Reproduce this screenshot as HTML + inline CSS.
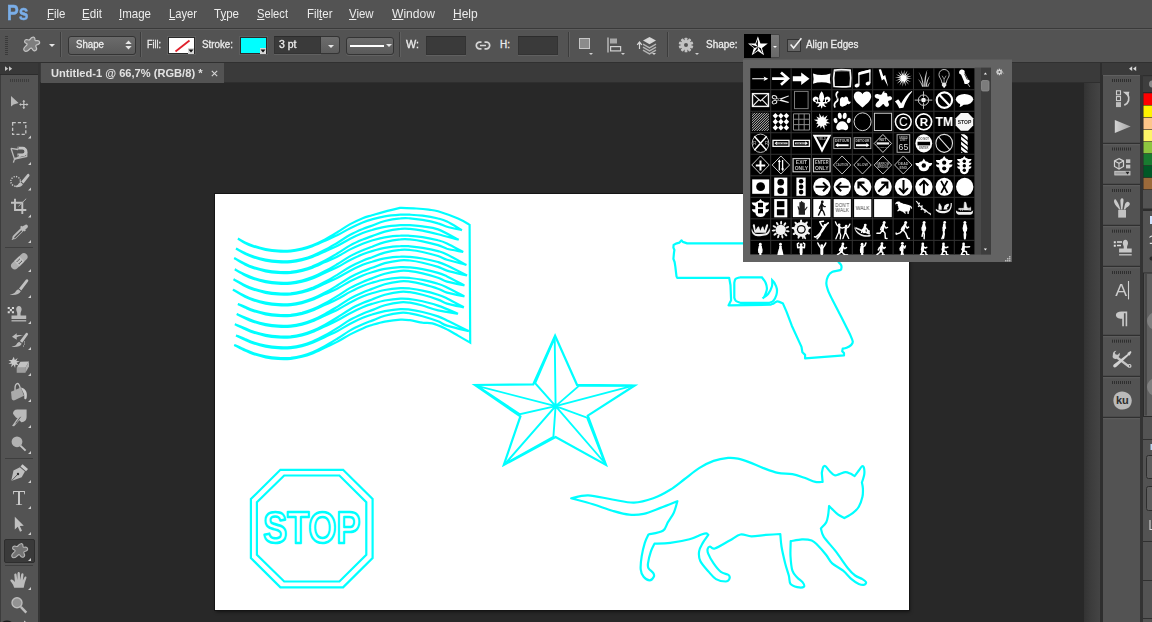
<!DOCTYPE html>
<html lang="en">
<head>
<meta charset="utf-8">
<title>Untitled-1 @ 66,7% (RGB/8) *</title>
<style>
*{box-sizing:border-box;margin:0;padding:0}
html,body{width:1152px;height:622px;overflow:hidden;background:#282828}
body{position:relative;font-family:"Liberation Sans",sans-serif;color:#e4e4e4;font-size:12px}
.abs{position:absolute}
.t{position:absolute;white-space:nowrap;transform-origin:0 50%;line-height:14px;color:#e8e8e8}
#menubar{left:0;top:0;width:1152px;height:29px;background:#535353;border-bottom:1px solid #3a3a3a}
#menubar .t{top:6px;font-size:13px;line-height:16px;color:#ececec}
#menubar .t u{text-decoration:underline;text-underline-offset:1px;text-decoration-thickness:1px}
#ps{position:absolute;left:7.3px;top:.6px;font-size:22.5px;font-weight:bold;color:#7aaee8;-webkit-text-stroke:.4px #7aaee8;line-height:24px;transform-origin:0 50%}
#optbar{left:0;top:29px;width:1152px;height:34px;background:#535353;border-top:1px solid #5e5e5e;border-bottom:1px solid #303030}
#optbar .t{font-size:10px;top:8.2px;-webkit-text-stroke:.3px #e8e8e8;color:#f0f0f0}
.sep{position:absolute;top:2px;width:2px;height:25px;border-left:1px solid #3c3c3c;border-right:1px solid #5f5f5f}
.dd{position:absolute;border:1px solid #343434;border-radius:3px;background:linear-gradient(#6b6b6b,#5a5a5a);box-shadow:0 1px 0 #626262}
.inp{position:absolute;background:#3a3a3a;border:1px solid #333;border-top-color:#2c2c2c;box-shadow:0 1px 0 #606060}
.sw{position:absolute;height:17px!important;border:1px solid #2a2a2a;box-shadow:0 0 0 1px #5e5e5e}
.tri{position:absolute;width:0;height:0;border-left:3px solid transparent;border-right:3px solid transparent;border-top:3px solid #e6e6e6}
.tris{position:absolute;width:0;height:0;border-left:2.5px solid transparent;border-right:2.5px solid transparent;border-top:2.5px solid #d0d0d0}
#tabbar{left:38px;top:63px;width:1064px;height:20px;background:#3a3a3a;border-bottom:1px solid #2e2e2e}
#tab{left:40.5px;top:63px;width:183.5px;height:19.5px;background:#535353}
#tab .t{left:10px;top:3px;font-size:11.5px;font-weight:bold;color:#e2e2e2}
#tools{left:0;top:63px;width:40px;height:559px;background:#535353;border-right:2px solid #343434;border-left:1px solid #3c3c3c}
#toolshead{left:0;top:63px;width:38px;height:12px;background:#383838;border-bottom:1px solid #2c2c2c}
#vscroll{left:1084px;top:83px;width:16.5px;height:539px;background:linear-gradient(90deg,#333,#3c3c3c 40%,#454545)}
#rgap{left:1100px;top:63px;width:3px;height:559px;background:#2e2e2e}
#rhead{left:1102px;top:63px;width:50px;height:12px;background:#3a3a3a}
#ricons{left:1103px;top:75px;width:37px;height:547px;background:#535353}
#rgap2{left:1140px;top:75px;width:3px;height:547px;background:#333}
#rpanel{left:1143px;top:75px;width:9px;height:547px;background:#535353}
#canvas{left:215px;top:194px;width:694px;height:416px;background:#fff;box-shadow:0 0 0 1px #151515, 1px 2px 3px rgba(0,0,0,.5)}
#art{left:0;top:0;width:1152px;height:622px}
#picker{left:743px;top:60px;width:269px;height:202px;background:#636363;box-shadow:0 -1px 0 rgba(99,99,99,.5)}
#pgrid{left:750px;top:68px;width:225px;height:187px;background:#000}
#ps{transform:scaleX(0.7809)}
#m1{transform:scaleX(0.8823)}
#m2{transform:scaleX(0.8926)}
#m3{transform:scaleX(0.8850)}
#m4{transform:scaleX(0.8607)}
#m5{transform:scaleX(0.8864)}
#m6{transform:scaleX(0.8578)}
#m7{transform:scaleX(0.8822)}
#m8{transform:scaleX(0.8800)}
#m9{transform:scaleX(0.9297)}
#m10{transform:scaleX(0.9234)}
#o_shape{transform:scaleX(0.9681)}
#o_fill{transform:scaleX(0.8996)}
#o_stroke{transform:scaleX(0.9783)}
#o_3pt{transform:scaleX(1.0487)}
#o_w{transform:scaleX(1.0791)}
#o_h{transform:scaleX(1.0000)}
#o_shape2{transform:scaleX(0.9967)}
#o_align{transform:scaleX(0.9836)}
#tabt{transform:scaleX(0.9654)}

</style>
</head>
<body>
<div id="menubar" class="abs">
  <div id="ps">Ps</div>
  <span class="t" id="m1" style="left:47px"><u>F</u>ile</span>
  <span class="t" id="m2" style="left:82px"><u>E</u>dit</span>
  <span class="t" id="m3" style="left:119px"><u>I</u>mage</span>
  <span class="t" id="m4" style="left:169px"><u>L</u>ayer</span>
  <span class="t" id="m5" style="left:214px">T<u>y</u>pe</span>
  <span class="t" id="m6" style="left:257px"><u>S</u>elect</span>
  <span class="t" id="m7" style="left:306.5px">Fil<u>t</u>er</span>
  <span class="t" id="m8" style="left:349px"><u>V</u>iew</span>
  <span class="t" id="m9" style="left:392px"><u>W</u>indow</span>
  <span class="t" id="m10" style="left:453px"><u>H</u>elp</span>
</div>
<div id="optbar" class="abs">
  <!-- gripper -->
  <div class="abs" style="left:5px;top:6px;width:3px;height:20px;background:repeating-linear-gradient(#3a3a3a 0 1px,transparent 1px 2px)"></div>
  <!-- tool preset icon -->
  <svg class="abs" style="left:0;top:0" width="60" height="32" viewBox="0 30 60 32"><path transform="translate(12 -506.500)" d="M20.900 543.700c1.300-.3 2.100.6 2 1.900-.1 1.100.3 1.800 1.400 1.600 1.500-.3 3 .2 3.300 1.500.3 1.400-.9 2.200-2.200 2.500-1.500.3-2 1.100-1.300 2.300.7 1.300.7 2.800-.5 3.500-1.200.7-2.500 0-3.200-1.300-.6-1.100-1.500-1.400-2.400-.5-1.200 1.200-2.300 2.700-4.200 2.600-1.700-.1-2.500-1.600-1.800-3.100.6-1.300 1.900-2.100 2.800-3.200.6-.8.300-1.400-.6-1.700-1.200-.4-1.900-1.300-1.500-2.400.4-1.200 1.700-1.500 2.900-1.100 1.100.4 2 .3 2.600-.7.600-1 1.300-1.700 2.700-1.900z" fill="#7e7e7e" stroke="#c4c4c4" stroke-width="1.200"/></svg>
  <div class="tri" style="left:48.500px;top:14px"></div>
  <div class="sep" style="left:60px"></div>
  <div class="dd" style="left:68px;top:5.5px;width:68px;height:19.5px"></div>
  <span class="t" id="o_shape" style="left:76px">Shape</span>
  <svg class="abs" style="left:125px;top:9.5px" width="7" height="10" viewBox="0 0 7 10"><path d="M.3 4L3.500.6 6.700 4zM.3 6L3.500 9.400 6.700 6z" fill="#e6e6e6"/></svg>
  <div class="sep" style="left:140px"></div>
  <span class="t" id="o_fill" style="left:147px">Fill:</span>
  <div class="sw" style="left:168px;top:7px;width:27px;height:18px;background:#fff"></div>
  <svg class="abs" style="left:169px;top:8px" width="25" height="16" viewBox="0 0 25 16"><path d="M6.500 13.500L20.500 2.500" stroke="#e0202c" stroke-width="1.800"/><path d="M19 10h6v6h-6z" fill="#d8d8d8"/><path d="M19.500 11.500h5L22 14.500z" fill="#111"/></svg>
  <span class="t" id="o_stroke" style="left:202px">Stroke:</span>
  <div class="sw" style="left:240px;top:7px;width:27px;height:18px;background:#00ffff"></div>
  <svg class="abs" style="left:241px;top:8px" width="25" height="16" viewBox="0 0 25 16"><path d="M19 10h6v6h-6z" fill="#d8d8d8"/><path d="M19.500 11.500h5L22 14.500z" fill="#111"/></svg>
  <div class="inp" style="left:274px;top:6px;width:47px;height:18px"></div>
  <div class="abs" style="left:321px;top:6px;width:19px;height:18px;background:linear-gradient(#6c6c6c,#5c5c5c);border:1px solid #343434;border-left:none;border-radius:0 3px 3px 0"></div>
  <div class="tri" style="left:327.500px;top:15px"></div>
  <span class="t" id="o_3pt" style="left:278.500px">3 pt</span>
  <div class="dd" style="left:346px;top:7px;width:48px;height:18px"></div>
  <div class="abs" style="left:350px;top:14.500px;width:34px;height:2.500px;background:#fff"></div>
  <div class="tri" style="left:385.500px;top:14px"></div>
  <div class="sep" style="left:399px"></div>
  <span class="t" id="o_w" style="left:405.500px">W:</span>
  <div class="inp" style="left:426px;top:6px;width:40px;height:19px"></div>
  <svg class="abs" style="left:475px;top:10px" width="16" height="11" viewBox="0 0 16 11"><path d="M6.500 2.200H4.600a3.300 3.300 0 0 0 0 6.600h1.900M9.500 2.200h1.900a3.300 3.300 0 0 1 0 6.600H9.500M5 5.500h6" fill="none" stroke="#d6d6d6" stroke-width="1.700"/></svg>
  <span class="t" id="o_h" style="left:500px">H:</span>
  <div class="inp" style="left:518px;top:6px;width:40px;height:19px"></div>
  <div class="sep" style="left:568px"></div>
  <!-- path operations -->
  <div class="abs" style="left:578.500px;top:8px;width:11px;height:11px;background:#8b8b8b;border:1px solid #c6c6c6"></div>
  <div class="tris" style="left:589px;top:23px"></div>
  <!-- align -->
  <svg class="abs" style="left:606px;top:7px" width="17" height="16" viewBox="0 0 17 16"><path d="M2 .5v15" stroke="#d0d0d0" stroke-width="1.200"/><rect x="4" y="1.500" width="7" height="5" fill="#a8a8a8"/><rect x="4.600" y="9.600" width="10" height="4.300" fill="none" stroke="#d0d0d0" stroke-width="1.200"/></svg>
  <div class="tris" style="left:620.500px;top:23px"></div>
  <!-- arrange -->
  <svg class="abs" style="left:636px;top:6px" width="22" height="20" viewBox="0 0 22 20"><path d="M3.500 13V6.500M1.200 8.800L3.500 6l2.300 2.800" stroke="#d8d8d8" stroke-width="1.200" fill="none"/><path d="M13.500 1l6.500 3.600-6.500 3.600L7 4.600z" fill="#d6d6d6"/><path d="M7 8.200l6.500 3.600L20 8.200M7 11.200l6.500 3.600 6.500-3.600M7 14.200l6.500 3.600 6.500-3.600" stroke="#b4b4b4" stroke-width="1.500" fill="none"/></svg>
  <div class="tris" style="left:652px;top:23px"></div>
  <div class="sep" style="left:667px"></div>
  <!-- gear -->
  <svg class="abs" style="left:678px;top:7px" width="16" height="16" viewBox="-8 -8 16 16"><g fill="#c2c2c2"><circle r="5"/><rect x="-1.400" y="-7.300" width="2.800" height="14.600" rx=".6" transform="rotate(0)"/><rect x="-1.400" y="-7.300" width="2.800" height="14.600" rx=".6" transform="rotate(36)"/><rect x="-1.400" y="-7.300" width="2.800" height="14.600" rx=".6" transform="rotate(72)"/><rect x="-1.400" y="-7.300" width="2.800" height="14.600" rx=".6" transform="rotate(108)"/><rect x="-1.400" y="-7.300" width="2.800" height="14.600" rx=".6" transform="rotate(144)"/></g><circle r="2" fill="#535353"/></svg>
  <div class="tris" style="left:694.500px;top:23px"></div>
  <span class="t" id="o_shape2" style="left:705.500px">Shape:</span>
  <div class="abs" style="left:744px;top:4px;width:27px;height:24px;background:#000"></div>
  <svg class="abs" style="left:744px;top:4px" width="27" height="24" viewBox="0 0 27 24"><g transform="translate(13.900 12.800) scale(1.1)"><path d="M0-9.500L2.300-3.100 9-2.900 3.700 1.200 5.600 7.700 0 3.900-5.600 7.700-3.700 1.200-9-2.900-2.300-3.100z" fill="#fff"/><path d="M0-7.200V0L-1.700-2.500zM7-2.300L0 0 2.800-1zM4.300 6L0 0 2.700 1.400zM-4.300 6L0 0-.1 3zM-7-2.300L0 0-2.900 1z" fill="#000"/></g></svg>
  <div class="abs" style="left:771px;top:4px;width:9px;height:24px;background:linear-gradient(#787878,#6a6a6a);border:1px solid #454545;border-left:none;border-radius:0 2px 2px 0"></div>
  <div class="tris" style="left:773px;top:15.500px;border-top-color:#f4f4f4"></div>
  <!-- checkbox -->
  <div class="abs" style="left:787px;top:9px;width:14px;height:13px;background:#676767;border:1px solid #333"></div>
  <svg class="abs" style="left:787px;top:6px" width="17" height="16" viewBox="0 0 17 16"><path d="M3.600 8.400l3 3.600L14.400 2.200" fill="none" stroke="#f4f4f4" stroke-width="1.500"/></svg>
  <span class="t" id="o_align" style="left:806px">Align Edges</span>
</div>
<div id="tabbar" class="abs"></div>
<div id="tab" class="abs"><span class="t" id="tabt">Untitled-1 @ 66,7% (RGB/8) *</span>
<svg class="abs" style="left:170px;top:6.500px" width="7" height="7" viewBox="0 0 7 7"><path d="M.8 .8l5.400 5.400M6.200 .8L.8 6.200" stroke="#d6d6d6" stroke-width="1.100"/></svg></div>
<div id="tools" class="abs"></div>
<div id="toolshead" class="abs"></div>
<div id="vscroll" class="abs"></div>
<div id="rgap" class="abs"></div>
<div id="rhead" class="abs"></div>
<div id="ricons" class="abs"></div>
<div id="rgap2" class="abs"></div>
<div id="rpanel" class="abs"></div>
<div id="canvas" class="abs"></div>
<svg class="abs" style="left:0;top:63px" width="40" height="559" viewBox="0 63 40 559">
<g fill="#c8c8c8" stroke="none" opacity=".9">
<!-- header arrows -->
<path d="M5 66.300l3.200 2.400L5 71.100zM9 66.300l3.200 2.400L9 71.100z" fill="#d8d8d8"/>
<!-- gripper -->
<path d="M10.500 79v3M12.500 79v3M14.500 79v3M16.500 79v3M18.500 79v3M20.500 79v3M22.500 79v3M24.500 79v3M26.500 79v3M28.500 79v3" stroke="#3a3a3a" stroke-width="1" fill="none"/>
<!-- corner triangles -->
<g fill="#dcdcdc">
<path d="M31 135.500v3h-3zM31 162v3h-3zM31 187.600v3h-3zM31 214.500v3h-3zM31 240v3h-3zM31 269v3h-3zM31 295v3h-3zM31 321v3h-3zM31 347v3h-3zM31 373v3h-3zM31 399v3h-3zM31 425v3h-3zM31 451v3h-3zM31 480v3h-3zM31 506v3h-3zM31 532v3h-3zM31 587v3h-3z"/>
</g>
<!-- separators -->
<path d="M5 247.500h28M5 458.500h28M5 565.500h28" stroke="#3c3c3c" stroke-width="1" fill="none"/>
<!-- 1 move -->
<path d="M11 96v10.600l2.600-2.200 5-1.300z" fill="#c4c4c4"/>
<path d="M23.800 100.500v8M19.800 104.500h8" stroke="#cfcfcf" stroke-width="1.200" fill="none"/>
<path d="M22.300 101.800l1.500-1.900 1.500 1.900zM22.300 107.200l1.500 1.900 1.500-1.900zM21.100 103l-1.900 1.500 1.900 1.500zM26.500 103l1.900 1.500-1.900 1.500z" fill="#cfcfcf"/>
<!-- 2 marquee -->
<rect x="12.600" y="122.600" width="13.200" height="11.800" fill="none" stroke="#d2d2d2" stroke-width="1.300" stroke-dasharray="3.200 2"/>
<!-- 3 lasso (magnetic) -->
<path d="M11 148.300l7 1.200M26.800 153l-.100 3.500-12.200 2.600zM11 148.300l3.500 10.800M14.500 159.100l-1.100 3.500" fill="none" stroke="#c6c6c6" stroke-width="1.300"/>
<path d="M17.400 146.800h5.300a4.750 4.750 0 0 1 0 9.500h-5.300v-2.700h5a2.050 2.050 0 0 0 0-4.100h-5z" fill="#d0d0d0"/>
<path d="M17.400 147.800h1.600M17.400 155.300h1.600" stroke="#535353" stroke-width=".8" fill="none"/>
<circle cx="15.400" cy="158.600" r="1" fill="#c6c6c6"/>
<!-- 4 quick select -->
<circle cx="15.600" cy="181.300" r="4.800" fill="none" stroke="#e0e0e0" stroke-width="1.300" stroke-dasharray="1.200 1.300"/>
<path d="M29 174.200c.7.600.7 1.300.2 2l-5.700 7.200-2.300-1.900 5.900-7.100c.6-.7 1.300-.8 1.900-.2z" fill="#d0d0d0"/>
<path d="M20.500 182.200l2.400 2c-1 2.700-5 3.600-9.400 2.600 2.600-.5 4.100-1.400 4.700-2.600.5-1 1.300-1.700 2.300-2z" fill="#cacaca"/>
<!-- 5 crop -->
<path d="M15 198.700v11.300h11.300M11 202.700h11.300v11.200" fill="none" stroke="#cdcdcd" stroke-width="1.900"/>
<path d="M18.500 206.300l7.700-7.600" stroke="#bdbdbd" stroke-width="1" fill="none"/>
<!-- 6 eyedropper -->
<path d="M24.700 225.200c1-.900 2.100-.8 2.800 0 .7.800.6 1.800-.3 2.700l-1.900 1.700.6.700-1.300 1.200-.8-.8-7.600 7.600c-.9.900-1.900 1.100-2.700.9l-1.300.9-.6-.6.900-1.300c-.3-.9 0-1.800.8-2.700l7.600-7.600-.8-.8 1.300-1.300.7.700z" fill="#c6c6c6"/>
<path d="M21.300 230.200l-6.600 6.600c-.5.500-.7 1-.5 1.500.5.200 1 0 1.500-.5l6.600-6.600z" fill="#535353"/>
<!-- 7 healing brush (bandaid) -->
<g transform="rotate(-44 19.300 261.300)"><rect x="9.300" y="257.600" width="20" height="7.400" rx="3.700" fill="#b9b9b9"/><rect x="15.800" y="257.600" width="7" height="7.400" fill="#cfcfcf"/><circle cx="17.700" cy="259.800" r=".6" fill="#535353"/><circle cx="19.300" cy="259.800" r=".6" fill="#535353"/><circle cx="20.900" cy="259.800" r=".6" fill="#535353"/><circle cx="17.700" cy="262.800" r=".6" fill="#535353"/><circle cx="19.300" cy="262.800" r=".6" fill="#535353"/><circle cx="20.900" cy="262.800" r=".6" fill="#535353"/></g>
<!-- 8 brush -->
<path d="M27.700 279.500c.7.500.8 1.200.3 1.900l-6.700 9-2.300-1.800 6.900-8.800c.5-.6 1.200-.7 1.800-.3z" fill="#cdcdcd"/>
<path d="M18.300 289.200l2.500 2c-1.100 3-5.700 4.300-11.200 3.500 3.200-.6 5.100-1.600 5.900-3 .6-1.200 1.600-2.100 2.800-2.500z" fill="#c6c6c6"/>
<!-- 9 stamp -->
<path d="M16.200 309.200c0-1.900 1.100-3.200 2.700-3.200s2.700 1.300 2.700 3.200c0 1.400-.6 2.300-.9 3.400-.2.800-.2 1.800-.1 2.800h5.600v3.700H11.500v-3.700h5.700c.1-1 .1-2-.1-2.800-.3-1.100-.9-2-.9-3.400z" fill="#c6c6c6"/>
<path d="M11.500 320.800h14.700" stroke="#c6c6c6" stroke-width="1.300" fill="none"/>
<path d="M7.700 307h2.100v2.100H7.700zM11.900 307h2.100v2.100h-2.100zM9.800 309.100h2.100v2.100H9.800zM7.700 311.200h2.100v2.100H7.700zM11.900 311.200h2.100v2.100h-2.100z" fill="#e6e6e6"/>
<!-- 10 history brush -->
<path d="M27.400 333.100c.7.500.8 1.200.3 1.900l-5.500 7.800-2.300-1.800 5.700-7.600c.5-.6 1.200-.7 1.800-.3z" fill="#cdcdcd"/>
<path d="M19.200 341.700l2.500 2c-1.100 2.700-5.300 3.800-10.300 3.100 2.900-.5 4.600-1.400 5.300-2.700.5-1.100 1.400-2 2.500-2.400z" fill="#c6c6c6"/>
<path d="M12 336.700l4.700-3.500v2.100c2.600-.6 5-.5 7.300.2-2.700 0-5 .5-7.300 1.800v2.400z" fill="#c6c6c6"/>
<path d="M24.500 341.500v.9M24.500 343.600v.9M23.500 345.600v.9" stroke="#e0e0e0" stroke-width="1" fill="none"/>
<!-- 11 magic eraser -->
<path d="M13.800 356.800l1 3.200 2.900-2-1.400 3.100 3.500.1-3.200 1.500 2.200 2.700-3.300-.9-.4 3.500-1.500-3.200-2.600 2.400.9-3.400-3.500.2 2.900-2-2.800-2.100 3.500.2z" fill="#d6d6d6"/>
<path d="M20.400 361.700l8.600-.1-3.600 6.200h-8.700z" fill="#d0d0d0"/>
<path d="M16.700 367.800h8.700v5h-8.700z" fill="#a8a8a8"/>
<path d="M29 361.600v4.900l-3.600 6.300v-5z" fill="#bcbcbc"/>
<!-- 12 paint bucket -->
<path d="M15.300 391.500c-.6-3.600-.1-6.600 1.400-7.700 1.500-1 2.800.8 3.700 4.800" fill="none" stroke="#cfcfcf" stroke-width="1.300"/>
<path d="M11 391.800l9.800-4.300 3.200 8.300-8.900 4.300c-1.600.7-2.800.2-3.400-1.400z" fill="#b4b4b4"/>
<path d="M20.800 387.500c2.400.3 4.400 1.700 5.400 4 .9 2.100.8 4.500.4 6.500-.2 1-.9 1.500-1.500 1.300-.7-.2-.9-.9-.8-1.800.2-1.900-.3-3.800-1.300-5.400z" fill="#dadada"/>
<!-- 13 smudge -->
<path d="M13 413.800c0-2.700 1.500-4.300 4.300-4.300h9.300v7.300c0 3.600-2.400 5.600-5.300 5.400l-1.900-2-5.300 6-2.100-.3 5.600-8-1.500-.1z" fill="#c6c6c6"/>
<path d="M20.700 416.800l-5 6.600" stroke="#535353" stroke-width=".9" fill="none"/>
<!-- 14 dodge -->
<circle cx="17" cy="441.800" r="5.400" fill="#bdbdbd"/>
<path d="M20.400 445.600l5.200 5" stroke="#d0d0d0" stroke-width="2" fill="none"/>
<!-- 15 pen -->
<path d="M22.500 464.200l5.500 4.700-2 2.300-5.500-4.700z" fill="#d6d6d6"/>
<path d="M19.900 467.300l5 4.300-3.200 5.600-10.500 3.900 2.300-10.500z" fill="#cacaca"/>
<path d="M11.400 480.900l6.200-6.500" stroke="#535353" stroke-width=".9" fill="none"/>
<circle cx="18" cy="474" r="1.200" fill="#2c2c2c"/>
<!-- 17 path select -->
<path d="M14.800 516.800v12.600l3-2.700 2.200 5 2-.9-2.200-4.900 4-.2z" fill="#cdcdcd"/>
<!-- 18 selected custom shape -->
<rect x="4.500" y="539.500" width="30" height="23" rx="1.500" fill="#383838" stroke="#2a2a2a" stroke-width="1"/>
<path d="M31 558v3h-3z" fill="#dcdcdc"/>
<path d="M20.900 543.700c1.300-.3 2.100.6 2 1.900-.1 1.100.3 1.800 1.400 1.600 1.500-.3 3 .2 3.300 1.500.3 1.400-.9 2.200-2.200 2.500-1.500.3-2 1.100-1.300 2.300.7 1.300.7 2.800-.5 3.500-1.200.7-2.500 0-3.200-1.300-.6-1.100-1.500-1.400-2.400-.5-1.200 1.200-2.300 2.700-4.200 2.600-1.700-.1-2.500-1.600-1.800-3.100.6-1.300 1.900-2.100 2.800-3.200.6-.8.300-1.400-.6-1.700-1.200-.4-1.900-1.300-1.500-2.400.4-1.200 1.700-1.500 2.900-1.100 1.100.4 2 .3 2.600-.7.600-1 1.300-1.700 2.700-1.900z" fill="#777" stroke="#c0c0c0" stroke-width="1.100"/>
<!-- 19 hand -->
<path d="M14.200 587.700c-.6-2.100-1.500-3.900-2.800-5.400-.9-1-1.400-2-.7-2.600.8-.7 1.900-.1 2.800.8l1.400 1.500-.6-7c-.1-.9.300-1.500 1-1.600.7-.1 1.200.4 1.300 1.300l.7 5.200.2-6.400c0-.9.500-1.500 1.200-1.500s1.200.6 1.200 1.500l.2 6.400 1.100-5.400c.2-.9.700-1.300 1.400-1.200.7.100 1 .7.900 1.600l-.7 5.700 1.500-3.200c.4-.8 1-1.100 1.600-.8.600.3.700.9.400 1.700-1.100 2.800-2 5.900-2.600 9.400z" fill="#c8c8c8"/>
<!-- 20 zoom -->
<circle cx="17" cy="602.800" r="5" fill="#9a9a9a" stroke="#c8c8c8" stroke-width="1.400"/>
<path d="M20.800 606.800l5.500 5.800" stroke="#c8c8c8" stroke-width="2.400" fill="none"/>
</g>
<ellipse cx="7" cy="624" rx="5.500" ry="3.600" fill="#1c1c1c"/><path d="M24 622l.8-1.600.8 1.600z" fill="#eee"/>
<!-- 16 type -->
<text style="filter:grayscale(1)" x="19" y="505.300" text-anchor="middle" font-family="Liberation Serif, serif" font-size="20.500" fill="#cbcbcb">T</text>
</svg>
<svg class="abs" style="left:1100px;top:63px" width="52" height="559" viewBox="1100 63 52 559">
<defs><linearGradient id="pg" x1="0" y1="0" x2="1" y2="0"><stop offset="0" stop-color="#d4d4d4"/><stop offset="1" stop-color="#a4a4a4"/></linearGradient></defs>
<!-- header arrows -->
<path d="M1132.200 66.300l-3.200 2.400 3.200 2.400zM1136.200 66.300l-3.200 2.400 3.200 2.400z" fill="#d8d8d8"/>
<!-- group separators -->
<path d="M1103 143.500h37M1103 184.500h37M1103 225.500h37M1103 266.500h37M1103 335.500h37M1103 376.500h37M1103 417.500h37" stroke="#303030" stroke-width="1.400" fill="none"/>
<path d="M1103 144.700h37M1103 185.700h37M1103 226.700h37M1103 267.700h37M1103 336.700h37M1103 377.700h37M1103 418.700h37M1103 75.500h37" stroke="#606060" stroke-width="1" fill="none"/>
<!-- grippers -->
<g stroke="#2e2e2e" stroke-width="1" fill="none">
<path d="M1112.500 79v3M1114.500 79v3M1116.500 79v3M1118.500 79v3M1120.500 79v3M1122.500 79v3M1124.500 79v3M1126.500 79v3M1128.500 79v3M1130.500 79v3M1112.500 147.5v3M1114.500 147.5v3M1116.500 147.5v3M1118.500 147.5v3M1120.500 147.5v3M1122.500 147.5v3M1124.500 147.5v3M1126.500 147.5v3M1128.500 147.5v3M1130.500 147.5v3M1112.500 189.0v3M1114.500 189.0v3M1116.500 189.0v3M1118.500 189.0v3M1120.500 189.0v3M1122.500 189.0v3M1124.500 189.0v3M1126.500 189.0v3M1128.500 189.0v3M1130.500 189.0v3M1112.500 229.7v3M1114.500 229.7v3M1116.500 229.7v3M1118.500 229.7v3M1120.500 229.7v3M1122.500 229.7v3M1124.500 229.7v3M1126.500 229.7v3M1128.500 229.7v3M1130.500 229.7v3M1112.500 271.0v3M1114.500 271.0v3M1116.500 271.0v3M1118.500 271.0v3M1120.500 271.0v3M1122.500 271.0v3M1124.500 271.0v3M1126.500 271.0v3M1128.500 271.0v3M1130.500 271.0v3M1112.500 339.7v3M1114.500 339.7v3M1116.500 339.7v3M1118.500 339.7v3M1120.500 339.7v3M1122.500 339.7v3M1124.500 339.7v3M1126.500 339.7v3M1128.500 339.7v3M1130.500 339.7v3M1112.500 381.0v3M1114.500 381.0v3M1116.500 381.0v3M1118.500 381.0v3M1120.500 381.0v3M1122.500 381.0v3M1124.500 381.0v3M1126.500 381.0v3M1128.500 381.0v3M1130.500 381.0v3"/>
</g>
<g fill="#c6c6c6">
<!-- history -->
<rect x="1116.500" y="90.800" width="4" height="4" fill="none" stroke="#cfcfcf" stroke-width="1.100"/>
<rect x="1116.500" y="96.600" width="4" height="4" fill="none" stroke="#cfcfcf" stroke-width="1.100"/>
<rect x="1116" y="102.100" width="5" height="5" fill="#bdbdbd"/>
<path d="M1124.300 105.200c4.300-1.700 5.800-6.300 3.300-11.400" fill="none" stroke="#cdcdcd" stroke-width="1.800"/>
<path d="M1122.800 91.800h6.600l-1.300 4.800-2.400-2.300z" fill="#cdcdcd"/>
<!-- play -->
<path d="M1114.800 120l15.900 6.500-15.900 6.500z" fill="url(#pg)"/>
<!-- 3D -->
<path d="M1119 158.600l4.500 2.300v5.600l-4.500 2.600-4.500-2.600v-5.600z" fill="none" stroke="#d2d2d2" stroke-width="1.200"/>
<path d="M1114.500 160.900l4.500 2.400 4.500-2.400M1119 163.300v5.800" fill="none" stroke="#d2d2d2" stroke-width="1.100"/>
<rect x="1126" y="159.300" width="4.300" height="3.700" fill="#c2c2c2"/><rect x="1126" y="164.700" width="4.300" height="3.700" fill="#c2c2c2"/>
<rect x="1114.800" y="171.300" width="15.200" height="3.700" fill="#a2a2a2" stroke="#d0d0d0" stroke-width=".8"/>
<path d="M1125.500 171.800h4l-2 2.800z" fill="#222"/>
<!-- brush presets -->
<path d="M1118.200 209.800h7.800v7.800h-7.800z" fill="#c2c2c2"/>
<path d="M1119.300 209.600c-1.700-2.600-4.300-4.400-5.100-7.200-.4-1.500 0-2.900 1-3.400 1.800 1.900 3.200 4.200 4 6.800l1.300 3.800zM1121 209.600l-.6-8.300c-.1-1.600.5-2.900 1.600-3 1.100-.1 1.700 1.200 1.500 2.800l-1.100 8.500zM1123.800 209.600l.9-4.300c.5-2.400 2-3.700 3.600-3.400 1.500.3 2 1.900 1.100 3.400-.8 1.400-2.200 1.700-3.300 2.700l-1 1.600z" fill="#cacaca"/>
<!-- clone source -->
<path d="M1113.800 241.200h2v2h-2zM1113.800 244.700h2v2h-2zM1117 241.200h5v1.600h-5zM1117 244.700h4v1.600h-4z" fill="#dedede"/>
<path d="M1122.800 243c0-1.900 1.100-3.200 2.600-3.200s2.600 1.300 2.600 3.200c0 1.400-.5 2.100-.8 3.100-.2.700-.2 1.600-.1 2.500h4.600v4h-12.600v-4h4.600c.1-.9.100-1.800-.1-2.500-.3-1-.8-1.700-.8-3.100z" fill="#c8c8c8"/>
<path d="M1119.100 254.800h12.600" stroke="#c8c8c8" stroke-width="1.300" fill="none"/>
<!-- A| bar -->
<path d="M1128.500 281v18.400" stroke="#d0d0d0" stroke-width="1.100" fill="none"/>
<!-- pilcrow -->
<path d="M1127.200 311.600v14.600h-1.600v-13h-1.700v13h-1.700v-7.400c-3.800.1-6.300-1.300-6.300-3.700 0-2.300 2.200-3.500 5.700-3.500z" fill="#c8c8c8"/>
<!-- tools -->
<path d="M1113 353.300c.4-1.600 1.700-2.600 3.400-2.500l-1.700 2 1 1.800 2.200.2 1.600-2c.7 1.400.3 3.100-1 4.100l10.400 8.200c1.200 1 .1 2.800-1.300 2l-10.900-8.300c-1.800.7-3.500-.2-4.100-1.700z" fill="#c6c6c6"/>
<path d="M1130.500 351l1 1-1.800 3.400-.9-.1-12.400 11.500c-1 .9-2.400 1-3-.1-.6-1 .1-2.200 1.100-2.700l13.100-10-.1-.9z" fill="#d2d2d2"/>
<circle cx="1129.600" cy="365.900" r="1.900" fill="#d6d6d6"/><circle cx="1129.600" cy="365.900" r=".8" fill="#535353"/>
<!-- ku -->
<path d="M1113.400 400.300c0-5.200 3.300-8.800 8.600-8.800 5.400 0 9.500 3.500 9.700 8.800.2 5.400-3.400 9.300-9.200 9.300-5.500 0-9.100-3.700-9.100-9.300z" fill="#bababa"/>
</g>
<text style="filter:grayscale(1)" x="1115.300" y="296.400" font-family="Liberation Sans, sans-serif" font-size="17" fill="#cdcdcd" textLength="11.800" lengthAdjust="spacingAndGlyphs">A</text>
<text x="1122.400" y="404.300" text-anchor="middle" font-family="Liberation Sans, sans-serif" font-size="11" font-weight="bold" fill="#2e2e2e">ku</text>
<!-- right panel strip -->
<g>
<rect x="1143" y="75" width="9" height="17" fill="#3e3e3e"/>
<rect x="1143" y="75" width="9" height="1.200" fill="#2e2e2e"/>
<circle cx="1152.500" cy="84" r="3.500" fill="#8a8a8a"/>
<rect x="1143" y="92" width="9" height="99" fill="#2a2a2a"/>
<rect x="1143.500" y="93.300" width="9" height="11.700" fill="#ff0000"/>
<rect x="1143.500" y="105.600" width="9" height="11.600" fill="#fff200"/>
<rect x="1143.500" y="117.800" width="9" height="11.500" fill="#fdc689"/>
<rect x="1143.500" y="129.900" width="9" height="11.400" fill="#fff568"/>
<rect x="1143.500" y="141.900" width="9" height="11.400" fill="#8dc63f"/>
<rect x="1143.500" y="153.900" width="9" height="11.400" fill="#197b30"/>
<rect x="1143.500" y="165.900" width="9" height="11.400" fill="#005826"/>
<rect x="1143.500" y="177.900" width="9" height="11.400" fill="#9c6a3a"/>
<rect x="1143" y="190" width="9" height="19" fill="#535353"/>
<rect x="1143" y="208.500" width="9" height="2.500" fill="#2c2c2c"/>
<rect x="1150" y="216" width="2" height="8" fill="#cfe3ff"/>
<path d="M1149.500 237.500c1-1.300 2-1.500 3-1.300M1149.800 243.300h2.200" stroke="#e0e0e0" stroke-width="1.200" fill="none"/>
<circle cx="1151.500" cy="258.500" r="2" fill="#2a2a2a"/>
<rect x="1143.500" y="273" width="9" height="143.500" fill="#606060" stroke="#2c2c2c" stroke-width="1"/>
<rect x="1144.500" y="274" width="2.500" height="141.500" fill="#484848"/>
<circle cx="1156" cy="321" r="9" fill="#808080"/><circle cx="1156" cy="387" r="9" fill="#808080"/>
<path d="M1143 439.500h9M1143 541.500h9M1143 580.500h9M1143 618.500h9" stroke="#303030" stroke-width="1.200" fill="none"/>
<rect x="1150.500" y="444" width="2" height="6" fill="#b8d4f0"/>
<rect x="1146.500" y="455.500" width="8" height="23" rx="2" fill="#5e5e5e" stroke="#2e2e2e" stroke-width="1"/>
<rect x="1146.500" y="486.500" width="8" height="24" rx="2" fill="#5e5e5e" stroke="#2e2e2e" stroke-width="1"/>
<path d="M1150 520v9.500h2" stroke="#d8d8d8" stroke-width="1.100" fill="none"/>
</g>
</svg>
<svg id="art" class="abs" viewBox="0 0 1152 622" fill="none" stroke="#00ffff" stroke-width="2.2">
<path d="M468.9 224.4C467.1 223.4 463.1 220.8 458.0 218.6C452.9 216.4 442.9 212.8 438.0 211.3C433.1 209.8 432.3 210.2 428.7 209.7C425.1 209.2 420.9 208.8 416.2 208.5C411.5 208.2 403.1 207.9 400.5 207.8C397.9 208.4 389.6 210.3 384.8 211.6C380.1 212.8 375.7 214.2 372.0 215.3C368.3 216.4 366.3 216.7 362.7 218.2C359.1 219.7 354.4 221.8 350.2 224.1C346.0 226.4 341.8 229.4 337.6 232.0C333.4 234.6 329.3 237.2 325.1 239.4C320.9 241.6 316.4 243.7 312.5 245.2C308.6 246.7 305.6 247.6 302.0 248.5C298.4 249.4 294.7 250.2 290.7 250.5C286.7 250.8 282.4 250.8 278.2 250.6C274.0 250.4 269.8 249.9 265.6 249.1C261.4 248.3 256.5 246.8 253.1 245.7C249.7 244.6 247.5 243.6 245.0 242.4C242.5 241.2 239.1 239.2 237.9 238.5C239.1 239.2 242.5 241.7 245.0 243.0C247.5 244.3 249.7 245.3 253.1 246.4C256.5 247.5 261.4 249.0 265.6 249.8C269.8 250.6 274.0 251.2 278.2 251.4C282.4 251.7 286.7 251.6 290.7 251.3C294.7 251.0 298.4 250.2 302.0 249.4C305.6 248.6 308.6 247.6 312.5 246.2C316.4 244.8 320.9 242.5 325.1 240.7C329.3 238.8 333.4 237.2 337.6 235.1C341.8 233.0 346.0 230.3 350.2 228.2C354.4 226.1 359.1 224.0 362.7 222.5C366.3 221.0 368.3 220.4 372.0 219.4C375.7 218.4 380.1 217.1 384.8 216.3C389.6 215.5 396.3 215.0 400.5 214.7C404.7 214.4 406.2 214.5 409.9 214.7C413.6 214.9 417.8 215.1 422.5 215.7C427.2 216.3 433.9 217.5 438.0 218.5C442.1 219.5 443.0 219.6 447.0 221.5C451.0 223.4 459.4 228.7 461.9 230.1C459.4 229.5 451.0 227.8 447.0 226.7C443.0 225.6 442.1 224.5 438.0 223.4C433.9 222.2 427.2 220.7 422.5 219.9C417.8 219.1 413.6 218.6 409.9 218.3C406.2 218.1 404.7 217.9 400.5 218.4C396.3 218.8 389.6 219.8 384.8 221.0C380.1 222.2 375.7 224.2 372.0 225.6C368.3 226.9 366.3 227.4 362.7 229.0C359.1 230.5 354.4 232.5 350.2 234.8C346.0 237.1 341.8 240.2 337.6 242.7C333.4 245.1 329.3 247.6 325.1 249.8C320.9 252.0 316.4 254.2 312.5 255.7C308.6 257.3 305.6 258.1 302.0 259.0C298.4 259.9 294.7 260.7 290.7 261.0C286.7 261.4 282.4 261.4 278.2 261.2C274.0 261.0 269.8 260.5 265.6 259.7C261.4 258.9 256.5 257.5 253.1 256.3C249.7 255.2 247.8 254.3 245.0 253.0C242.2 251.7 237.5 249.3 236.0 248.6C237.5 249.5 242.2 252.3 245.0 253.8C247.8 255.2 249.7 256.0 253.1 257.1C256.5 258.3 261.4 259.7 265.6 260.6C269.8 261.4 274.0 261.9 278.2 262.1C282.4 262.4 286.7 262.4 290.7 262.1C294.7 261.7 298.4 261.0 302.0 260.1C305.6 259.3 308.6 258.4 312.5 256.9C316.4 255.5 320.9 253.2 325.1 251.4C329.3 249.5 333.4 247.8 337.6 245.8C341.8 243.7 346.0 240.9 350.2 238.8C354.4 236.7 359.1 234.6 362.7 233.1C366.3 231.6 368.3 231.0 372.0 230.0C375.7 228.9 380.1 227.6 384.8 226.8C389.6 226.0 396.3 225.5 400.5 225.2C404.7 224.9 406.2 225.0 409.9 225.2C413.6 225.5 417.8 225.7 422.5 226.4C427.2 227.1 432.0 227.1 438.0 229.4C444.0 231.6 455.2 238.1 458.7 239.8C455.2 238.9 444.0 235.8 438.0 234.3C432.0 232.7 427.2 231.5 422.5 230.6C417.8 229.7 413.6 229.2 409.9 228.9C406.2 228.6 404.7 228.4 400.5 228.9C396.3 229.3 389.6 230.4 384.8 231.6C380.1 232.8 375.7 234.8 372.0 236.1C368.3 237.5 366.3 238.0 362.7 239.6C359.1 241.1 354.4 243.1 350.2 245.4C346.0 247.7 341.8 250.8 337.6 253.3C333.4 255.8 329.3 258.3 325.1 260.5C320.9 262.7 316.4 264.9 312.5 266.4C308.6 268.0 305.6 268.9 302.0 269.8C298.4 270.7 294.7 271.4 290.7 271.8C286.7 272.1 282.4 272.2 278.2 271.9C274.0 271.7 269.8 271.2 265.6 270.4C261.4 269.6 256.5 268.2 253.1 267.1C249.7 266.0 248.2 265.3 245.0 263.7C241.8 262.2 236.0 259.0 234.2 258.0C236.0 259.1 241.8 262.9 245.0 264.5C248.2 266.1 249.7 266.8 253.1 267.9C256.5 269.0 261.4 270.5 265.6 271.3C269.8 272.1 274.0 272.6 278.2 272.9C282.4 273.1 286.7 273.1 290.7 272.8C294.7 272.5 298.4 271.8 302.0 270.9C305.6 270.0 308.6 269.1 312.5 267.6C316.4 266.2 320.9 263.9 325.1 262.1C329.3 260.2 333.4 258.5 337.6 256.4C341.8 254.3 346.0 251.6 350.2 249.4C354.4 247.3 359.1 245.2 362.7 243.7C366.3 242.2 368.3 241.6 372.0 240.5C375.7 239.5 380.1 238.2 384.8 237.4C389.6 236.6 396.3 235.9 400.5 235.7C404.7 235.4 406.2 235.6 409.9 235.8C413.6 236.0 417.8 236.4 422.5 237.1C427.2 237.8 433.9 239.2 438.0 240.3C442.1 241.3 442.8 241.5 447.0 243.5C451.2 245.4 460.5 250.6 463.2 252.0C460.5 251.4 451.2 249.8 447.0 248.7C442.8 247.5 442.1 246.4 438.0 245.1C433.9 243.9 427.2 242.2 422.5 241.3C417.8 240.3 413.6 239.8 409.9 239.4C406.2 239.1 404.7 238.9 400.5 239.4C396.3 239.8 389.6 240.9 384.8 242.1C380.1 243.3 375.7 245.3 372.0 246.7C368.3 248.0 366.3 248.6 362.7 250.2C359.1 251.7 354.4 253.8 350.2 256.1C346.0 258.4 341.8 261.4 337.6 264.0C333.4 266.5 329.3 269.0 325.1 271.1C320.9 273.3 316.4 275.6 312.5 277.1C308.6 278.7 305.6 279.6 302.0 280.5C298.4 281.4 294.7 282.2 290.7 282.5C286.7 282.9 282.4 282.9 278.2 282.7C274.0 282.5 269.8 282.0 265.6 281.2C261.4 280.4 256.5 279.0 253.1 277.8C249.7 276.7 248.1 275.9 245.0 274.5C241.9 273.1 236.5 270.2 234.8 269.3C236.5 270.3 241.9 273.7 245.0 275.2C248.1 276.8 249.7 277.5 253.1 278.6C256.5 279.8 261.4 281.2 265.6 282.1C269.8 282.9 274.0 283.4 278.2 283.6C282.4 283.9 286.7 283.9 290.7 283.6C294.7 283.2 298.4 282.5 302.0 281.6C305.6 280.8 308.6 279.8 312.5 278.4C316.4 276.9 320.9 274.6 325.1 272.8C329.3 270.9 333.4 269.2 337.6 267.1C341.8 264.9 346.0 262.2 350.2 260.1C354.4 257.9 359.1 255.8 362.7 254.3C366.3 252.8 368.3 252.2 372.0 251.1C375.7 250.0 380.1 248.7 384.8 247.9C389.6 247.1 396.3 246.4 400.5 246.2C404.7 245.9 406.2 246.1 409.9 246.3C413.6 246.6 417.8 247.0 422.5 247.8C427.2 248.6 433.9 250.0 438.0 251.1C442.1 252.3 442.3 252.2 447.0 254.5C451.7 256.8 463.2 263.2 466.4 264.9C463.2 264.0 451.7 261.1 447.0 259.7C442.3 258.2 442.1 257.3 438.0 256.0C433.9 254.7 427.2 253.0 422.5 252.0C417.8 251.0 413.6 250.4 409.9 250.0C406.2 249.6 404.7 249.4 400.5 249.9C396.3 250.3 389.6 251.4 384.8 252.6C380.1 253.9 375.7 255.9 372.0 257.3C368.3 258.6 366.3 259.2 362.7 260.7C359.1 262.3 354.4 264.4 350.2 266.7C346.0 269.0 341.8 272.1 337.6 274.6C333.4 277.1 329.3 279.6 325.1 281.8C320.9 284.0 316.4 286.3 312.5 287.9C308.6 289.4 305.6 290.4 302.0 291.3C298.4 292.2 294.7 292.9 290.7 293.3C286.7 293.6 282.4 293.7 278.2 293.4C274.0 293.2 269.8 292.7 265.6 291.9C261.4 291.1 256.5 289.7 253.1 288.6C249.7 287.5 248.3 286.8 245.0 285.2C241.7 283.7 235.4 280.3 233.5 279.3C235.4 280.4 241.7 284.3 245.0 286.0C248.3 287.7 249.7 288.3 253.1 289.4C256.5 290.5 261.4 292.0 265.6 292.8C269.8 293.6 274.0 294.1 278.2 294.4C282.4 294.6 286.7 294.6 290.7 294.3C294.7 294.0 298.4 293.3 302.0 292.4C305.6 291.5 308.6 290.6 312.5 289.1C316.4 287.6 320.9 285.3 325.1 283.4C329.3 281.5 333.4 279.8 337.6 277.7C341.8 275.6 346.0 272.8 350.2 270.7C354.4 268.5 359.1 266.4 362.7 264.8C366.3 263.3 368.3 262.7 372.0 261.7C375.7 260.6 380.1 259.3 384.8 258.4C389.6 257.6 396.3 256.9 400.5 256.7C404.7 256.4 406.2 256.6 409.9 256.9C413.6 257.2 417.8 257.6 422.5 258.5C427.2 259.3 433.9 260.9 438.0 262.0C442.1 263.2 442.2 263.2 447.0 265.5C451.8 267.7 463.7 273.8 467.0 275.5C463.7 274.7 451.8 272.1 447.0 270.6C442.2 269.2 442.1 268.2 438.0 266.9C433.9 265.6 427.2 263.8 422.5 262.7C417.8 261.6 413.6 260.9 409.9 260.5C406.2 260.2 404.7 259.9 400.5 260.3C396.3 260.8 389.6 261.9 384.8 263.1C380.1 264.4 375.7 266.5 372.0 267.8C368.3 269.2 366.3 269.8 362.7 271.3C359.1 272.9 354.4 275.0 350.2 277.3C346.0 279.6 341.8 282.7 337.6 285.3C333.4 287.8 329.3 290.3 325.1 292.5C320.9 294.7 316.4 297.0 312.5 298.6C308.6 300.2 305.6 301.1 302.0 302.0C298.4 302.9 294.7 303.7 290.7 304.0C286.7 304.4 282.4 304.4 278.2 304.2C274.0 304.0 269.8 303.5 265.6 302.7C261.4 301.9 256.5 300.5 253.1 299.3C249.7 298.2 248.4 297.6 245.0 296.0C241.6 294.4 234.9 290.7 232.9 289.6C234.9 290.8 241.6 295.0 245.0 296.8C248.4 298.5 249.7 299.0 253.1 300.1C256.5 301.3 261.4 302.7 265.6 303.6C269.8 304.4 274.0 304.9 278.2 305.1C282.4 305.4 286.7 305.4 290.7 305.1C294.7 304.7 298.4 304.0 302.0 303.1C305.6 302.2 308.6 301.3 312.5 299.8C316.4 298.3 320.9 296.0 325.1 294.1C329.3 292.2 333.4 290.5 337.6 288.4C341.8 286.2 346.0 283.5 350.2 281.3C354.4 279.1 359.1 276.9 362.7 275.4C366.3 273.9 368.3 273.3 372.0 272.2C375.7 271.1 380.1 269.8 384.8 268.9C389.6 268.1 396.3 267.4 400.5 267.1C404.7 266.9 406.2 267.1 409.9 267.4C413.6 267.8 417.8 268.3 422.5 269.2C427.2 270.1 433.9 271.7 438.0 272.9C442.1 274.1 442.6 274.4 447.0 276.4C451.4 278.5 461.5 283.9 464.4 285.4C461.5 284.8 451.4 282.9 447.0 281.6C442.6 280.4 442.1 279.2 438.0 277.8C433.9 276.4 427.2 274.5 422.5 273.4C417.8 272.3 413.6 271.5 409.9 271.1C406.2 270.7 404.7 270.4 400.5 270.8C396.3 271.3 389.6 272.4 384.8 273.7C380.1 274.9 375.7 277.0 372.0 278.4C368.3 279.8 366.3 280.3 362.7 281.9C359.1 283.5 354.4 285.6 350.2 287.9C346.0 290.2 341.8 293.4 337.6 295.9C333.4 298.5 329.3 301.0 325.1 303.2C320.9 305.4 316.4 307.7 312.5 309.3C308.6 310.9 305.6 311.8 302.0 312.8C298.4 313.7 294.7 314.4 290.7 314.8C286.7 315.1 282.4 315.2 278.2 314.9C274.0 314.7 269.8 314.2 265.6 313.4C261.4 312.6 256.5 311.2 253.1 310.1C249.7 309.0 247.5 307.7 245.0 306.7C242.5 305.7 239.1 304.5 237.9 304.1C239.1 304.7 242.5 306.4 245.0 307.5C247.5 308.6 249.7 309.8 253.1 310.9C256.5 312.0 261.4 313.5 265.6 314.3C269.8 315.1 274.0 315.6 278.2 315.9C282.4 316.1 286.7 316.1 290.7 315.8C294.7 315.5 298.4 314.8 302.0 313.9C305.6 313.0 308.6 312.0 312.5 310.5C316.4 309.0 320.9 306.7 325.1 304.8C329.3 302.9 333.4 301.2 337.6 299.0C341.8 296.9 346.0 294.1 350.2 291.9C354.4 289.8 359.1 287.5 362.7 286.0C366.3 284.5 368.3 283.9 372.0 282.8C375.7 281.7 380.1 280.3 384.8 279.5C389.6 278.6 396.3 277.9 400.5 277.6C404.7 277.4 406.2 277.6 409.9 278.0C413.6 278.4 417.8 278.9 422.5 279.9C427.2 280.9 433.9 282.5 438.0 283.8C442.1 285.0 442.6 285.3 447.0 287.4C451.4 289.5 461.5 294.9 464.4 296.4C461.5 295.8 451.4 293.9 447.0 292.6C442.6 291.3 442.1 290.1 438.0 288.7C433.9 287.2 427.2 285.3 422.5 284.1C417.8 282.9 413.6 282.1 409.9 281.6C406.2 281.2 404.7 280.9 400.5 281.3C396.3 281.8 389.6 282.9 384.8 284.2C380.1 285.5 375.7 287.6 372.0 288.9C368.3 290.3 366.3 290.9 362.7 292.5C359.1 294.1 354.4 296.2 350.2 298.5C346.0 300.9 341.8 304.0 337.6 306.6C333.4 309.1 329.3 311.6 325.1 313.9C320.9 316.1 316.4 318.4 312.5 320.0C308.6 321.6 305.6 322.6 302.0 323.5C298.4 324.4 294.7 325.1 290.7 325.5C286.7 325.9 282.4 325.9 278.2 325.7C274.0 325.5 269.8 325.0 265.6 324.2C261.4 323.4 256.5 322.0 253.1 320.8C249.7 319.7 247.7 318.6 245.0 317.5C242.3 316.4 238.1 314.7 236.7 314.1C238.1 314.8 242.3 317.0 245.0 318.2C247.7 319.5 249.7 320.5 253.1 321.6C256.5 322.8 261.4 324.2 265.6 325.1C269.8 325.9 274.0 326.4 278.2 326.6C282.4 326.9 286.7 326.9 290.7 326.6C294.7 326.2 298.4 325.5 302.0 324.6C305.6 323.7 308.6 322.7 312.5 321.2C316.4 319.7 320.9 317.4 325.1 315.5C329.3 313.6 333.4 311.8 337.6 309.7C341.8 307.5 346.0 304.7 350.2 302.5C354.4 300.4 359.1 298.1 362.7 296.6C366.3 295.1 368.3 294.4 372.0 293.3C375.7 292.2 380.1 290.9 384.8 290.0C389.6 289.1 396.3 288.4 400.5 288.1C404.7 287.9 406.2 288.1 409.9 288.5C413.6 289.0 417.8 289.6 422.5 290.6C427.2 291.6 433.9 293.4 438.0 294.7C442.1 296.0 442.7 296.3 447.0 298.4C451.3 300.5 461.0 305.8 463.8 307.3C461.0 306.7 451.3 304.9 447.0 303.6C442.7 302.3 442.1 301.0 438.0 299.6C433.9 298.1 427.2 296.0 422.5 294.8C417.8 293.6 413.6 292.7 409.9 292.2C406.2 291.7 404.7 291.4 400.5 291.8C396.3 292.2 389.6 293.5 384.8 294.7C380.1 296.0 375.7 298.1 372.0 299.5C368.3 300.9 366.3 301.5 362.7 303.1C359.1 304.7 354.4 306.8 350.2 309.2C346.0 311.5 341.8 314.6 337.6 317.2C333.4 319.8 329.3 322.3 325.1 324.6C320.9 326.8 316.4 329.1 312.5 330.7C308.6 332.3 305.6 333.3 302.0 334.2C298.4 335.2 294.7 335.9 290.7 336.3C286.7 336.6 282.4 336.7 278.2 336.4C274.0 336.2 269.8 335.7 265.6 334.9C261.4 334.1 256.5 332.7 253.1 331.6C249.7 330.5 248.1 329.5 245.0 328.2C241.9 327.0 236.5 324.9 234.8 324.2C236.5 325.0 241.9 327.6 245.0 329.0C248.1 330.4 249.7 331.3 253.1 332.4C256.5 333.5 261.4 335.0 265.6 335.8C269.8 336.6 274.0 337.1 278.2 337.4C282.4 337.6 286.7 337.6 290.7 337.3C294.7 337.0 298.4 336.3 302.0 335.4C305.6 334.5 308.6 333.5 312.5 331.9C316.4 330.4 320.9 328.1 325.1 326.2C329.3 324.2 333.4 322.5 337.6 320.3C341.8 318.1 346.0 315.3 350.2 313.2C354.4 311.0 359.1 308.7 362.7 307.2C366.3 305.7 368.3 305.0 372.0 303.9C375.7 302.8 380.1 301.4 384.8 300.5C389.6 299.7 396.3 298.9 400.5 298.6C404.7 298.4 406.2 298.7 409.9 299.1C413.6 299.5 417.8 300.2 422.5 301.3C427.2 302.4 432.1 303.5 438.0 305.6C443.9 307.6 454.7 312.3 458.0 313.7C454.7 313.2 443.9 311.8 438.0 310.4C432.1 309.1 427.2 306.8 422.5 305.5C417.8 304.2 413.6 303.3 409.9 302.7C406.2 302.2 404.7 301.9 400.5 302.3C396.3 302.7 389.6 304.0 384.8 305.3C380.1 306.6 375.7 308.7 372.0 310.1C368.3 311.5 366.3 312.1 362.7 313.7C359.1 315.3 354.4 317.4 350.2 319.8C346.0 322.1 341.8 325.3 337.6 327.9C333.4 330.5 329.3 333.0 325.1 335.3C320.9 337.5 316.4 339.8 312.5 341.5C308.6 343.1 305.6 344.1 302.0 345.0C298.4 345.9 294.7 346.6 290.7 347.0C286.7 347.4 282.4 347.4 278.2 347.2C274.0 347.0 269.8 346.5 265.6 345.7C261.4 344.9 256.5 343.5 253.1 342.3C249.7 341.2 247.8 340.1 245.0 339.0C242.2 337.8 237.5 336.0 236.0 335.4C237.5 336.1 242.2 338.5 245.0 339.8C247.8 341.0 249.7 342.0 253.1 343.1C256.5 344.3 261.4 345.7 265.6 346.6C269.8 347.4 274.0 347.9 278.2 348.1C282.4 348.4 286.7 348.4 290.7 348.1C294.7 347.7 298.4 347.0 302.0 346.1C305.6 345.2 308.6 344.2 312.5 342.7C316.4 341.1 320.9 338.8 325.1 336.9C329.3 334.9 333.4 333.2 337.6 331.0C341.8 328.8 346.0 326.0 350.2 323.8C354.4 321.6 359.1 319.3 362.7 317.8C366.3 316.2 368.3 315.6 372.0 314.5C375.7 313.3 380.1 312.0 384.8 311.1C389.6 310.2 396.3 309.3 400.5 309.1C404.7 308.9 406.2 309.2 409.9 309.6C413.6 310.1 417.8 310.9 422.5 312.0C427.2 313.1 433.9 315.0 438.0 316.4C442.1 317.8 441.9 317.9 447.0 320.4C452.1 322.8 465.2 329.3 468.9 331.1C465.2 330.2 452.1 327.2 447.0 325.6C441.9 323.9 442.1 322.9 438.0 321.3C433.9 319.7 427.2 317.5 422.5 316.2C417.8 314.8 413.6 313.9 409.9 313.3C406.2 312.7 404.7 312.4 400.5 312.8C396.3 313.2 389.6 314.5 384.8 315.8C380.1 317.1 375.7 319.2 372.0 320.6C368.3 322.0 366.3 322.6 362.7 324.3C359.1 325.9 354.4 328.0 350.2 330.4C346.0 332.8 341.8 335.9 337.6 338.5C333.4 341.1 329.3 343.7 325.1 345.9C320.9 348.2 316.4 350.5 312.5 352.2C308.6 353.8 305.6 354.8 302.0 355.7C298.4 356.7 294.7 357.4 290.7 357.8C286.7 358.1 282.4 358.2 278.2 357.9C274.0 357.7 269.8 357.2 265.6 356.4C261.4 355.6 256.5 354.2 253.1 353.1C249.7 352.0 248.2 351.1 245.0 349.7C241.8 348.4 236.0 345.7 234.2 344.9C236.0 345.8 241.8 349.0 245.0 350.5C248.2 352.0 249.7 352.8 253.1 353.9C256.5 355.0 261.4 356.5 265.6 357.3C269.8 358.1 274.0 358.6 278.2 358.9C282.4 359.1 286.7 359.1 290.7 358.8C294.7 358.5 298.4 357.8 302.0 356.8C305.6 355.9 308.6 354.9 312.5 353.4C316.4 351.8 320.9 349.5 325.1 347.5C329.3 345.6 333.4 343.8 337.6 341.6C341.8 339.4 346.0 336.6 350.2 334.4C354.4 332.2 359.1 329.9 362.7 328.4C366.3 326.8 368.3 326.2 372.0 325.0C375.7 323.9 380.1 322.5 384.8 321.6C389.6 320.7 396.3 319.8 400.5 319.6C404.7 319.4 406.2 319.7 409.9 320.2C413.6 320.7 418.8 322.1 422.5 322.7C426.2 323.2 428.5 322.4 432.3 323.4C436.1 324.4 440.9 326.5 445.2 328.5C449.5 330.5 453.8 333.2 458.0 335.6C462.2 338.0 468.2 341.5 470.2 342.7L469.6 224.8Z" stroke-linejoin="miter" stroke-miterlimit="6"/>
<path d="M555.1 335.7L577.0 384.8L634.7 385.5L587.8 415.6L606.0 464.9L555.6 437.0L503.8 464.9L520.4 416.4L475.0 385.0L533.3 384.3Z" stroke-linejoin="miter"/><path d="M554.7 337.9L555.6 406.1L535.2 383.2ZM477.0 385.9L555.6 406.1L519.9 414.3ZM505.4 463.5L555.6 406.1L553.4 436.9ZM604.8 463.0L555.6 406.1L587.1 417.7ZM632.5 385.8L555.6 406.1L578.9 385.9Z" stroke-width="1.9" stroke-linejoin="miter"/>
<path d="M280.4 469.8L343.1 469.8L372.6 499.0L372.6 558.0L343.1 587.4L280.4 587.4L250.9 558.0L250.9 499.0ZM284.2 475.5L339.4 475.5L366.3 502.2L366.3 554.8L339.4 581.5L284.2 581.5L256.9 554.8L256.9 502.2Z"/><text x="0" y="0" transform="translate(262.9 542.7) scale(.8 1)" font-family="Liberation Sans, sans-serif" font-weight="bold" font-size="45" stroke-width="2.350" vector-effect="non-scaling-stroke" stroke-linejoin="round">STOP</text>
<path d="M743.0 243.4L687.2 243.4L682.8 241.9L681.6 240.3L679.5 242.6L675.9 243.6L673.6 245.0L673.4 247.6L674.4 250.0L674.0 252.6L673.4 258.9L674.6 262.0L675.3 266.4L676.5 276.4L677.2 277.9L729.2 277.9L730.5 285.2L731.1 300.3L728.6 305.3L770.7 304.7C771.2 304.4 772.8 303.8 774.0 303.2C775.2 302.6 776.2 301.2 777.7 301.3C779.2 301.4 782.1 303.2 783.0 303.6L786.5 311.6L791.8 325.7L801.5 346.9L802.4 352.2L805.1 354.9L805.1 358.4L844 355.4L844 353.1L842.2 351.3L842.7 348.7C843.4 348.6 845.2 348.4 846.6 347.8C848.0 347.2 850.0 346.1 851.0 345.1C852.0 344.1 852.9 343.4 852.8 341.6C852.6 339.8 850.5 335.7 850.1 334.5L841.3 316.9L832.5 300.1C831.8 298.5 829.0 293.1 828.0 290.3C827.0 287.5 826.3 285.7 826.3 283.3C826.3 280.9 827.0 278.1 828.0 276.2C829.0 274.3 830.4 272.8 832.5 271.8C834.6 270.8 838.9 271.0 840.4 270.0C841.9 269.0 841.6 266.9 841.3 265.6C841.0 264.3 839.0 262.7 838.6 262.1L838.6 258" stroke-linejoin="round"/><path d="M739.3 277.4L761.9 277.4C762.5 278.3 764.8 280.8 765.6 282.7C766.4 284.6 767.1 286.7 766.9 289.0C766.7 291.3 765.1 294.9 764.4 296.5C763.7 298.1 762.8 298.1 762.5 298.4C763.4 297.7 766.5 296.0 768.1 294.0C769.7 292.0 771.2 288.8 771.9 286.5C772.6 284.2 772.2 281.2 772.2 280.2C772.6 280.6 773.6 281.2 774.4 282.7C775.2 284.2 776.6 286.9 776.9 289.0C777.2 291.1 776.9 293.2 776.3 295.2C775.7 297.2 774.4 299.6 773.2 300.9C772.1 302.2 770.0 302.5 769.4 302.8L740.5 302.8C739.8 302.5 737.0 301.8 736.0 301.0C735.0 300.2 734.6 298.3 734.3 297.8L734.3 282.7C734.5 282.1 734.7 279.9 735.5 279.0C736.3 278.1 738.7 277.7 739.3 277.4" stroke-linejoin="miter"/>
<path d="M571.2 498.3C574.0 497.8 581.2 495.2 588.1 495.4C595.0 495.6 604.6 498.3 612.3 499.5C619.9 500.7 627.2 502.8 634.0 502.6C640.8 502.4 647.3 500.4 653.3 498.3C659.3 496.2 665.0 493.0 670.2 489.8C675.4 486.6 679.9 482.6 684.7 479.0C689.5 475.4 694.3 471.1 699.1 468.1C703.9 465.1 708.8 462.6 713.6 460.9C718.4 459.2 724.0 458.3 728.1 457.9C732.2 457.5 734.5 457.9 738.0 458.6C741.5 459.3 744.8 460.5 749.0 462.1C753.2 463.7 758.6 466.3 763.4 468.1C768.2 469.9 773.1 471.9 777.9 472.9C782.7 473.9 788.0 473.3 792.4 474.1C796.8 474.9 800.7 476.5 804.5 477.8C808.3 479.1 812.3 481.2 815.3 481.9C818.3 482.6 821.4 481.9 822.6 481.9L821.8 472.9C822.0 471.9 822.6 468.0 823.3 466.9C823.9 465.8 824.6 465.7 825.7 466.4C826.8 467.1 828.3 469.7 829.8 471.2C831.3 472.7 833.0 474.8 834.6 475.3C836.2 475.8 837.6 474.6 839.4 474.1C841.2 473.6 843.7 472.3 845.5 472.2C847.3 472.1 848.8 473.0 850.3 473.6C851.8 474.2 853.9 475.7 854.6 476.1C855.3 475.2 857.6 472.1 858.8 470.5C860.0 468.9 861.1 466.9 861.9 466.4C862.7 465.9 863.4 466.1 863.8 467.4C864.2 468.7 864.6 471.6 864.3 474.1C864.0 476.6 862.3 481.2 861.9 482.6C862.1 483.6 862.8 486.2 862.9 488.6C863.0 491.0 863.1 494.1 862.4 497.1C861.7 500.1 860.4 504.0 858.8 506.7C857.2 509.4 855.1 511.3 852.7 513.2C850.3 515.1 845.7 517.3 844.3 518.1C843.3 517.5 840.2 516.2 838.2 514.7C836.2 513.2 833.7 510.6 832.2 509.1C830.7 507.7 829.6 506.5 829.1 506.0C828.9 507.5 828.6 512.5 828.1 515.2C827.6 517.9 827.4 520.2 826.2 522.4C825.0 524.6 821.8 527.4 820.9 528.4C821.4 529.8 821.3 533.1 823.8 536.9C826.3 540.7 831.8 546.2 835.8 551.4C839.8 556.6 844.7 564.2 847.9 568.2C851.1 572.2 852.7 573.7 855.1 575.5C857.5 577.3 860.6 578.0 862.4 579.1C864.2 580.2 865.7 581.3 866.0 582.2C866.3 583.1 865.5 584.4 864.3 584.7C863.1 585.0 860.9 584.8 858.8 583.9C856.7 583.0 854.1 581.3 851.5 579.1C848.9 576.9 846.3 573.3 843.1 570.7C839.9 568.1 835.0 566.0 832.2 563.4C829.4 560.8 828.6 558.0 826.2 555.0C823.8 552.0 820.1 547.7 817.7 545.3C815.3 542.9 814.3 541.5 811.7 540.5C809.1 539.5 805.5 539.2 802.0 539.3C798.5 539.4 792.6 540.9 790.7 541.2C790.7 543.7 790.2 551.3 790.5 556.2C790.8 561.1 791.3 567.2 792.4 570.7C793.5 574.2 795.5 575.5 797.2 577.4C798.9 579.3 801.4 580.7 802.5 582.2C803.6 583.7 804.9 585.8 804.0 586.6C803.1 587.4 799.5 587.6 797.2 587.1C795.0 586.6 791.9 585.8 790.5 583.9C789.1 582.0 789.7 578.9 788.8 575.5C787.9 572.1 786.4 568.2 785.2 563.4C784.0 558.6 782.3 551.4 781.5 546.5C780.7 541.6 780.5 536.1 780.3 534.0C777.9 534.1 770.6 534.5 765.8 534.9C761.0 535.3 755.6 536.5 751.4 536.4C747.2 536.3 744.1 533.8 740.5 534.5C736.9 535.2 734.0 538.2 729.7 540.5C725.4 542.8 718.1 547.5 714.8 548.5C711.5 549.5 711.2 546.4 710.0 546.5C708.8 546.6 707.9 547.7 707.6 548.9C707.3 550.1 707.3 551.4 708.3 553.8C709.3 556.2 711.5 560.4 713.6 563.4C715.7 566.4 718.4 570.0 720.9 571.9C723.4 573.8 727.2 573.8 728.6 575.0C730.0 576.2 729.8 578.0 729.3 579.1C728.8 580.2 727.9 581.5 725.7 581.5C723.5 581.5 718.8 580.7 716.0 579.1C713.2 577.5 711.4 574.9 708.8 571.9C706.2 568.9 701.9 564.4 700.3 561.0C698.7 557.6 698.7 554.4 699.1 551.4C699.5 548.4 701.3 545.6 702.8 542.9C704.3 540.1 707.4 536.2 708.3 534.9C708.0 534.6 707.5 533.4 706.4 533.3C705.3 533.2 704.3 533.5 701.5 534.5C698.7 535.5 694.7 537.9 689.5 539.3C684.3 540.7 676.0 542.2 670.2 542.9C664.4 543.6 657.1 543.5 654.5 543.6C653.9 544.9 652.0 548.1 650.9 551.4C649.8 554.7 648.4 560.6 648.0 563.4C647.6 566.2 647.6 566.6 648.5 568.2C649.4 569.8 652.4 571.7 653.3 573.1C654.2 574.5 654.4 575.5 653.8 576.7C653.2 577.9 651.4 580.3 649.7 580.3C648.0 580.3 645.1 578.5 643.6 576.7C642.1 574.9 641.0 572.8 640.7 569.4C640.4 566.0 641.0 560.6 641.7 556.2C642.4 551.8 643.7 546.5 644.8 542.9C645.9 539.3 647.9 535.9 648.5 534.5C650.9 533.9 659.7 532.8 662.9 530.8C666.1 528.8 666.0 525.4 667.8 522.4C669.6 519.4 672.2 516.2 673.8 512.7C675.4 509.2 676.8 503.1 677.4 501.2C674.6 502.3 666.1 505.8 660.5 507.9C654.9 510.0 648.8 512.8 643.6 513.9C638.4 515.0 634.4 515.2 629.2 514.7C624.0 514.2 618.3 512.5 612.3 510.8C606.3 509.1 599.9 506.4 593.0 504.3C586.1 502.2 574.8 499.3 571.2 498.3Z" stroke-linejoin="round"/>
</svg>
<div id="picker" class="abs"></div>
<svg class="abs" style="left:743px;top:59px;filter:grayscale(1)" width="269" height="204" viewBox="743 59 269 204">
<defs><clipPath id="cg"><rect x="750.3" y="68.2" width="224.4" height="186.2"/></clipPath>
<clipPath id="ch"><rect x="1.500" y="1.300" width="17.300" height="18.400"/></clipPath>
<clipPath id="cb"><rect x="6.800" y="1.500" width="6.600" height="18.400"/></clipPath></defs>
<rect x="750.3" y="68.2" width="224.4" height="186.2" fill="#000"/>
<path d="M770.70 68.2V254.4M791.10 68.2V254.4M811.50 68.2V254.4M831.90 68.2V254.4M852.30 68.2V254.4M872.70 68.2V254.4M893.10 68.2V254.4M913.50 68.2V254.4M933.90 68.2V254.4M954.30 68.2V254.4M750.3 89.72H974.7M750.3 111.24H974.7M750.3 132.76H974.7M750.3 154.28H974.7M750.3 175.80H974.7M750.3 197.32H974.7M750.3 218.84H974.7M750.3 240.36H974.7" stroke="#333" stroke-width="1" fill="none"/>
<g clip-path="url(#cg)" fill="#fff">
<g transform="translate(750.30 68.20)"><path d="M1.900 10.500H16" stroke="#fff" stroke-width="1.100" fill="none"/><path d="M13.300 8.200L18 10.500 13.300 12.800 14.300 10.500z"/></g>
<g transform="translate(770.70 68.20)"><path d="M1.400 10.400H15.500" stroke="#fff" stroke-width="2.600" fill="none"/><path d="M10.300 4.300L17.200 10.400 10.300 16.500" stroke="#fff" stroke-width="2.700" fill="none" stroke-linejoin="miter"/></g>
<g transform="translate(791.10 68.20)"><path d="M1.700 8H10.100V4.200L18.400 10.500 10.100 16.900V13.100H1.700z"/></g>
<g transform="translate(811.50 68.20)"><path d="M1.500 5.300Q10.200 8.300 19 5.300Q17.900 10.400 19 15.500Q10.200 12.600 1.500 15.500Q2.600 10.400 1.500 5.300z"/></g>
<g transform="translate(831.90 68.20)"><path d="M2.600 1.900C7 1.300 13.500 1.500 18.200 1.900 18.900 6 18.800 14 18.300 18.200 13.500 18.900 6.500 18.800 2.200 18.300 1.600 13.500 1.700 6.500 2.600 1.900z" fill="none" stroke="#f4f4f4" stroke-width="1.700"/><path d="M2 3.500C6 2.600 14 2.600 18.700 3.200" fill="none" stroke="#bbb" stroke-width=".6"/></g>
<g transform="translate(852.30 68.20)"><path d="M6.600 4.800L17.600 2V14.800" fill="none" stroke="#fff" stroke-width="1.300"/><path d="M6.600 4.800V17" fill="none" stroke="#fff" stroke-width="1.300"/><path d="M6.200 4.200L18 1.300V4L6.200 7z"/><ellipse cx="4.700" cy="17.300" rx="2.500" ry="1.800" transform="rotate(-20 4.700 17.300)"/><ellipse cx="15.700" cy="15.300" rx="2.500" ry="1.800" transform="rotate(-20 15.700 15.300)"/></g>
<g transform="translate(872.70 68.20)"><path d="M6 1.400L8.300 1.100 10.600 8 12.500 6.800 15.400 18.600 11.300 10.900 9.100 12.300z"/></g>
<g transform="translate(893.10 68.20)"><path d="M13.39 9.70L18.96 10.86L13.27 10.89ZM13.27 10.87L17.98 14.07L12.71 11.92ZM12.72 11.90L15.84 16.66L11.80 12.65ZM11.82 12.64L12.88 18.23L10.68 12.99ZM10.70 12.99L9.54 18.56L9.51 12.87ZM9.53 12.87L6.33 17.58L8.48 12.31ZM8.50 12.32L3.74 15.44L7.75 11.40ZM7.76 11.42L2.17 12.48L7.41 10.28ZM7.41 10.30L1.84 9.14L7.53 9.11ZM7.53 9.13L2.82 5.93L8.09 8.08ZM8.08 8.10L4.96 3.34L9.00 7.35ZM8.98 7.36L7.92 1.77L10.12 7.01ZM10.10 7.01L11.26 1.44L11.29 7.13ZM11.27 7.13L14.47 2.42L12.32 7.69ZM12.30 7.68L17.06 4.56L13.05 8.60ZM13.04 8.58L18.63 7.52L13.39 9.72Z"/><circle cx="10.400" cy="10" r="3.100"/></g>
<g transform="translate(913.50 68.20)"><path d="M9.300 18.500C8.800 13 7.500 8 5 3.500 8.300 7.500 10 12.500 10.300 18.500zM10.600 18.500C10.600 12 11.500 6 13.800 1.500 12.800 7 12.300 12.500 11.800 18.500zM12 18.600C12.600 14 13.800 10.500 16.300 7.600 14.600 11.200 13.800 14.600 13.400 18.600zM8.600 18.600C7.800 15.500 6.300 12.800 4 10.600 6.800 12.300 8.600 14.800 9.600 18.600zM13.600 18.600C14.300 16.500 15.300 15 16.800 14 15.800 15.500 15.200 17 14.800 18.600z" fill="#c8c8c8"/></g>
<g transform="translate(933.90 68.20)"><path d="M10.200 1.300c-3 0-5.100 2.200-5.100 5 0 2 1 3.300 1.800 4.700.7 1.200 1 2.300 1.100 3.800h4.400c.1-1.500.4-2.600 1.100-3.800.8-1.400 1.800-2.700 1.800-4.700 0-2.800-2.100-5-5.100-5z" fill="none" stroke="#b8b8b8" stroke-width="1"/><path d="M8.200 7.500l2 3.500 2-3.500M10.200 11v3.500" fill="none" stroke="#b0b0b0" stroke-width=".8"/><rect x="8" y="14.800" width="4.400" height="3.400" rx=".8" fill="#e6e6e6"/><circle cx="10.200" cy="18.600" r="1"/></g>
<g transform="translate(954.30 68.20)"><path d="M5.300 2.600C6.200 1.300 8.300 1 9.700 2c.8.600.9 1.400.5 2.300l3.800 7.300c1 .1 1.600.9 1.300 1.900-.5 1.400-2.900 2.600-4.400 2.300-.9-.2-1.300-1-1-2L6.700 6.300c-1-.1-1.700-.6-1.900-1.500-.1-.8 0-1.500.5-2.200z"/><path d="M12.800 14.600l2.700 4" stroke="#ddd" stroke-width=".9" fill="none"/><path d="M10.200 5.500l2.900 6" stroke="#000" stroke-width=".8" fill="none"/></g>
<g transform="translate(750.30 89.72)"><rect x="2.200" y="3.900" width="16" height="12.800" fill="none" stroke="#f2f2f2" stroke-width="1.400"/><path d="M2.400 4.100l7.800 7.200 7.800-7.200M2.400 16.500l6-6.400M18 16.500l-6-6.400" fill="none" stroke="#f2f2f2" stroke-width="1.100"/></g>
<g transform="translate(770.70 89.72)"><ellipse cx="3.800" cy="7.600" rx="2.300" ry="1.600" transform="rotate(20 3.800 7.600)" fill="none" stroke="#e8e8e8" stroke-width="1"/><ellipse cx="3.800" cy="12.400" rx="2.300" ry="1.600" transform="rotate(-20 3.800 12.400)" fill="none" stroke="#e8e8e8" stroke-width="1"/><path d="M5.800 8.300L18.300 12.400 17.600 13.200 8.500 11zM5.800 11.700L18.300 6.600 17.800 5.800 8.500 9z" fill="#f0f0f0"/></g>
<g transform="translate(791.10 89.72)"><rect x="3.400" y="1.700" width="13.600" height="17.200" fill="none" stroke="#7a7a7a" stroke-width="1"/></g>
<g transform="translate(811.50 89.72)"><path d="M10.200 1.600c1.900 2.400 2.700 4.900 2.300 7.400-.2 1.300-.7 2.300-1.300 3.200h2.300c.2-1.300 0-2.400-.5-3.400 1.300-1.900 3.400-2.500 4.900-1.300 1.500 1.200 1.400 3.500-.2 4.600-1 .7-2.200.5-2.800-.3.900.1 1.500-.3 1.600-1 .1-.8-.6-1.300-1.300-1-.6.300-.8 1.200-.6 2.400h1.100v1.600h-3.200c.4 1.600 1.300 2.600 2.600 3.100-1.500.6-3 .2-3.900-1-.2 1.200-.5 2.200-1 3.100-.5-.9-.8-1.900-1-3.100-.9 1.200-2.400 1.600-3.900 1 1.300-.5 2.200-1.500 2.600-3.100H4.500v-1.600h1.100c.2-1.200 0-2.100-.6-2.400-.7-.3-1.400.2-1.300 1 .1.700.7 1.100 1.600 1-.6.800-1.800 1-2.800.3-1.600-1.100-1.700-3.400-.2-4.600 1.500-1.200 3.600-.6 4.900 1.300-.5 1-.7 2.100-.5 3.400H9c-.6-.9-1.100-1.900-1.300-3.200-.4-2.500.4-5 2.500-7.400z"/></g>
<g transform="translate(831.90 89.72)"><path d="M8 11.200C7.800 8.200 10.300 6.300 12.100 8 13.300 5.900 16.200 6.500 16.300 9.500 16.400 11.200 17.200 12.600 18.900 11.800 18.700 14.600 16.600 14.800 15.500 14.100 14 16.200 11 17.600 9 16.600 7.400 15.600 8.100 13.200 8 11.200z"/><path d="M5.800 2.300C4 3.800 4.100 5.800 5.100 7.400 6 8.900 6.400 10.200 5 11.600 3 12.800 1.900 14.600 2.900 17.200" fill="none" stroke="#fff" stroke-width="1.700" stroke-linecap="round"/><path d="M5.300 5.300c.6 1.300.6 2.500 0 3.700" fill="none" stroke="#000" stroke-width=".6"/></g>
<g transform="translate(852.30 89.72)"><path d="M10.200 17.800C6 14.300 1.500 11 1.500 6.600c0-2.800 2-4.700 4.500-4.700 1.800 0 3.400 1 4.200 2.600.8-1.600 2.400-2.600 4.200-2.600 2.500 0 4.500 1.900 4.500 4.700 0 4.400-4.500 7.700-8.700 11.200z"/></g>
<g transform="translate(872.70 89.72)"><path d="M11.700 3.200c1.600-.6 3 .4 2.900 2-.1 1.200.3 1.800 1.500 1.500 1.600-.4 3 .3 3.200 1.700.2 1.500-1 2.300-2.500 2.500-1.400.2-1.800 1-1.100 2.100.9 1.400.8 3.100-.6 3.800-1.500.8-2.900-.1-3.500-1.500-.5-1.100-1.300-1.200-2.100-.3-1.200 1.300-2.400 2.900-4.500 2.700-1.800-.2-2.700-1.900-1.900-3.500.7-1.400 2.100-2.200 3-3.400.6-.8.300-1.500-.7-1.700-1.600-.3-3.300-.8-3.400-2.500-.1-1.600 1.300-2.500 2.900-2.200 1.100.2 2 .7 3.100.6 1-.1 1.300-.7 1.600-1.500.3-1 1-2 2.100-2.300z"/></g>
<g transform="translate(893.10 89.72)"><path d="M1.800 11.800l3.300-2.300c1.200 1.300 2.100 2.700 2.900 4.300 2.500-5 6-9.300 10.600-12.500l.6.600c-3.900 4.500-6.800 9.800-8.900 16.100l-4.200.6c-.9-2.600-2.300-4.900-4.300-6.800z"/></g>
<g transform="translate(913.50 89.72)"><circle cx="10" cy="10.400" r="5.200" fill="none" stroke="#ccc" stroke-width="1"/><circle cx="10" cy="10.400" r="2.400" fill="#eee"/><path d="M10 1.600v6M10 13.200v6M1.200 10.400h6M12.800 10.400h6" stroke="#ccc" stroke-width=".9" fill="none"/></g>
<g transform="translate(933.90 89.72)"><circle cx="10.500" cy="10.400" r="7.700" fill="none" stroke="#fff" stroke-width="2.200"/><path d="M5.200 4.800l10.600 11.200" stroke="#fff" stroke-width="2.200" fill="none"/></g>
<g transform="translate(954.30 89.72)"><ellipse cx="10.200" cy="9.600" rx="8.700" ry="5.400"/><path d="M5.500 13.500c.6 1.400.4 2.700-.4 3.900 1.900-.4 3.500-1.400 4.600-3.100z"/></g>
<g transform="translate(750.30 111.24)"><g clip-path="url(#ch)"><path d="M-18.50 19.700l18.400-18.400M-16.00 19.700l18.400-18.400M-13.50 19.700l18.400-18.400M-11.00 19.700l18.400-18.400M-8.50 19.700l18.400-18.400M-6.00 19.700l18.400-18.400M-3.50 19.700l18.400-18.400M-1.00 19.700l18.400-18.400M1.50 19.700l18.400-18.400M4.00 19.700l18.400-18.400M6.50 19.700l18.400-18.400M9.00 19.700l18.400-18.400M11.50 19.700l18.400-18.400M14.00 19.700l18.400-18.400M16.50 19.700l18.400-18.400M19.00 19.700l18.400-18.400" stroke="#e4e4e4" stroke-width=".9" fill="none"/></g></g>
<g transform="translate(770.70 111.24)"><path d="M4.70 1.65l2.750 2.950-2.750 2.950-2.750-2.950zM10.20 1.65l2.750 2.950-2.750 2.950-2.750-2.950zM15.70 1.65l2.750 2.950-2.750 2.950-2.750-2.950zM4.70 7.55l2.750 2.950-2.750 2.950-2.750-2.950zM10.20 7.55l2.750 2.950-2.750 2.950-2.750-2.950zM15.70 7.55l2.750 2.950-2.750 2.950-2.750-2.950zM4.70 13.45l2.750 2.950-2.750 2.950-2.750-2.950zM10.20 13.45l2.750 2.950-2.750 2.950-2.750-2.950zM15.70 13.45l2.750 2.950-2.750 2.950-2.750-2.950z"/></g>
<g transform="translate(791.10 111.24)"><path d="M2.400 2.600h16v16.200h-16zM7.700 2.600v16.200M13.100 2.600v16.200M2.400 8v0h16M2.400 13.400h16" fill="none" stroke="#8c8c8c" stroke-width="1"/></g>
<g transform="translate(811.50 111.24)"><path d="M18.73 11.97L14.35 12.22L15.54 14.75L12.88 13.88L13.30 18.66L10.77 14.59L9.08 17.30L8.58 14.15L4.94 16.60L6.92 12.68L4.53 12.30L6.21 10.57L2.27 8.63L6.65 8.38L4.83 5.29L8.12 6.72L7.70 1.94L10.23 6.01L11.84 3.71L12.42 6.45L16.06 4.00L14.08 7.92L17.27 8.03L14.79 10.03Z"/></g>
<g transform="translate(831.90 111.24)"><path d="M10.300 10c2.500 0 4.600 2.100 5.700 4.600.9 2.100-.1 4.200-2.100 4.400-1.300.1-2.300-.7-3.600-.7-1.300 0-2.300.8-3.600.7-2-.2-3-2.300-2.100-4.400C5.700 12.100 7.800 10 10.300 10z"/><ellipse cx="3.700" cy="9.300" rx="1.900" ry="2.700" transform="rotate(-20 3.700 9.300)"/><ellipse cx="7.900" cy="4.700" rx="2" ry="3.100" transform="rotate(-6 7.900 4.700)"/><ellipse cx="12.800" cy="4.700" rx="2" ry="3.100" transform="rotate(6 12.800 4.700)"/><ellipse cx="16.900" cy="9.300" rx="1.900" ry="2.700" transform="rotate(20 16.900 9.300)"/></g>
<g transform="translate(852.30 111.24)"><ellipse cx="10.300" cy="10.500" rx="8.500" ry="8.900" fill="none" stroke="#d8d8d8" stroke-width="1"/></g>
<g transform="translate(872.70 111.24)"><rect x="1.700" y="2" width="17.200" height="17.300" fill="none" stroke="#cfcfcf" stroke-width="1"/></g>
<g transform="translate(893.10 111.24)"><circle cx="10.200" cy="10.600" r="7.900" fill="none" stroke="#fff" stroke-width="1.500"/><text x="10.300" y="14.700" text-anchor="middle" font-family="Liberation Sans, sans-serif" font-size="12" fill="#fff">C</text></g>
<g transform="translate(913.50 111.24)"><circle cx="10.200" cy="10.600" r="7.900" fill="none" stroke="#fff" stroke-width="1.700"/><text x="10.300" y="14.600" text-anchor="middle" font-family="Liberation Sans, sans-serif" font-weight="bold" font-size="11.500" fill="#fff">R</text></g>
<g transform="translate(933.90 111.24)"><text x="1.700" y="14.800" font-family="Liberation Sans, sans-serif" font-weight="bold" font-size="12.300" fill="#fff" textLength="17.400" lengthAdjust="spacingAndGlyphs">TM</text></g>
<g transform="translate(954.30 111.24)"><path d="M6.500 1.700h7.300l5.100 5.200v7.400l-5.100 5.200H6.500l-5.100-5.200V6.900z" fill="#f6f6f6"/><text x="10.200" y="12.700" text-anchor="middle" font-family="Liberation Sans, sans-serif" font-weight="bold" font-size="6.200" fill="#222" textLength="13.500" lengthAdjust="spacingAndGlyphs">STOP</text></g>
<g transform="translate(750.30 132.76)"><ellipse cx="10.200" cy="10.500" rx="8.300" ry="9.200" fill="none" stroke="#bdbdbd" stroke-width="1"/><path d="M4 3.600l12.400 13.800M16.400 3.600L4 17.400" stroke="#fff" stroke-width="1.500" fill="none"/><text x="2.600" y="12.300" font-family="Liberation Sans, sans-serif" font-size="4.800" fill="#bbb">R</text><text x="14.500" y="12.300" font-family="Liberation Sans, sans-serif" font-size="4.800" fill="#bbb">R</text></g>
<g transform="translate(770.70 132.76)"><rect x="2.300" y="7.600" width="16" height="6" fill="none" stroke="#f4f4f4" stroke-width="1.300"/><path d="M3.800 10.600l2.600-2v1.100h10.400v1.800H6.400v1.100z" fill="#eee"/><text x="11" y="11.400" text-anchor="middle" font-family="Liberation Sans, sans-serif" font-size="2.200" font-weight="bold" fill="#222">ONE WAY</text></g>
<g transform="translate(791.10 132.76)"><rect x="2.300" y="7.600" width="16" height="6" fill="none" stroke="#f4f4f4" stroke-width="1.300"/><path d="M16.800 10.600l-2.600-2v1.100H3.800v1.800h10.400v1.100z" fill="#eee"/><text x="9.400" y="11.400" text-anchor="middle" font-family="Liberation Sans, sans-serif" font-size="2.200" font-weight="bold" fill="#222">ONE WAY</text></g>
<g transform="translate(811.50 132.76)"><path d="M3 3h15l-7.500 14.600z" fill="none" stroke="#fff" stroke-width="2.200" stroke-linejoin="miter"/><text x="10.500" y="6.800" text-anchor="middle" font-family="Liberation Sans, sans-serif" font-size="2.600" font-weight="bold" fill="#aaa">YIELD</text></g>
<g transform="translate(831.90 132.76)"><rect x="1.900" y="5" width="16.600" height="10.800" fill="none" stroke="#a8a8a8" stroke-width="1"/><text x="10.200" y="9.300" text-anchor="middle" font-family="Liberation Sans, sans-serif" font-size="3.600" font-weight="bold" fill="#c4c4c4" textLength="14" lengthAdjust="spacingAndGlyphs">DETOUR</text><path d="M3.300 12.400l3-2.200v1.200h10.400v2H6.300v1.200z" fill="#fff"/></g>
<g transform="translate(852.30 132.76)"><rect x="1.900" y="5" width="16.600" height="10.800" fill="none" stroke="#a8a8a8" stroke-width="1"/><text x="10.200" y="9.300" text-anchor="middle" font-family="Liberation Sans, sans-serif" font-size="3.600" font-weight="bold" fill="#c4c4c4" textLength="14" lengthAdjust="spacingAndGlyphs">DETOUR</text><path d="M17.100 12.400l-3-2.200v1.200H3.700v2h10.400v1.200z" fill="#fff"/></g>
<g transform="translate(872.70 132.76)"><path d="M10.200 1.700l8.700 9-8.700 9-8.700-9z" fill="none" stroke="#cfcfcf" stroke-width="1"/><text x="10.200" y="8.300" text-anchor="middle" font-family="Liberation Sans, sans-serif" font-size="3.200" font-weight="bold" fill="#ddd">NOT</text><rect x="4" y="9.600" width="12.400" height="2.200" fill="#eee"/><text x="10.200" y="15" text-anchor="middle" font-family="Liberation Sans, sans-serif" font-size="2.400" font-weight="bold" fill="#aaa">NARROW</text></g>
<g transform="translate(893.10 132.76)"><rect x="4" y="1.900" width="12.600" height="17.600" fill="none" stroke="#b0b0b0" stroke-width="1"/><text x="10.300" y="5.800" text-anchor="middle" font-family="Liberation Sans, sans-serif" font-size="2.600" font-weight="bold" fill="#aaa">SPEED</text><text x="10.300" y="8.700" text-anchor="middle" font-family="Liberation Sans, sans-serif" font-size="2.600" font-weight="bold" fill="#aaa">LIMIT</text><text x="10.300" y="16.800" text-anchor="middle" font-family="Liberation Sans, sans-serif" font-size="8.600" fill="#ddd">65</text></g>
<g transform="translate(913.50 132.76)"><ellipse cx="10.300" cy="10.600" rx="8.400" ry="9.100" fill="#fff"/><rect x="4" y="9" width="12.600" height="3.600" fill="#000"/><text x="10.300" y="7" text-anchor="middle" font-family="Liberation Sans, sans-serif" font-size="2.700" font-weight="bold" fill="#555">DO NOT</text><text x="10.300" y="16.500" text-anchor="middle" font-family="Liberation Sans, sans-serif" font-size="2.700" font-weight="bold" fill="#555">ENTER</text></g>
<g transform="translate(933.90 132.76)"><ellipse cx="10.300" cy="10.600" rx="8.300" ry="9" fill="none" stroke="#e0e0e0" stroke-width="1.100"/><path d="M4.600 4.200l11.500 12.800" stroke="#e0e0e0" stroke-width="1.100" fill="none"/></g>
<g transform="translate(954.30 132.76)"><g clip-path="url(#cb)"><path d="M5 -1l10 8M5 4l10 8M5 9l10 8M5 14l10 8M5 19l10 8" stroke="#fff" stroke-width="2.600" fill="none"/></g></g>
<g transform="translate(750.30 154.28)"><path d="M10.200 1.700l8.700 9-8.700 9-8.700-9z" fill="none" stroke="#cfcfcf" stroke-width="1"/><path d="M10.200 6.300v9.800M5.500 11.200h9.400" stroke="#fff" stroke-width="2" fill="none"/></g>
<g transform="translate(770.70 154.28)"><path d="M10.200 1.700l8.700 9-8.700 9-8.700-9z" fill="none" stroke="#cfcfcf" stroke-width="1"/><path d="M8.600 6.500v9.800M11.900 5.600v9.800" stroke="#fff" stroke-width="1.300" fill="none"/><path d="M7.100 7.800l1.500-2.800 1.500 2.800zM10.400 14.200l1.500 2.800 1.500-2.800z" fill="#fff"/></g>
<g transform="translate(791.10 154.28)"><rect x="2" y="4.300" width="16.600" height="13.200" fill="none" stroke="#c8c8c8" stroke-width="1.200"/><text x="10.300" y="10" text-anchor="middle" font-family="Liberation Sans, sans-serif" font-size="5" font-weight="bold" fill="#c0c0c0">EXIT</text><text x="10.300" y="15.300" text-anchor="middle" font-family="Liberation Sans, sans-serif" font-size="5" font-weight="bold" fill="#c0c0c0">ONLY</text></g>
<g transform="translate(811.50 154.28)"><rect x="2" y="4.300" width="16.600" height="13.200" fill="none" stroke="#c8c8c8" stroke-width="1.200"/><text x="10.300" y="10" text-anchor="middle" font-family="Liberation Sans, sans-serif" font-size="4.600" font-weight="bold" fill="#c0c0c0" textLength="13.500" lengthAdjust="spacingAndGlyphs">ENTER</text><text x="10.300" y="15.300" text-anchor="middle" font-family="Liberation Sans, sans-serif" font-size="5" font-weight="bold" fill="#c0c0c0">ONLY</text></g>
<g transform="translate(831.90 154.28)"><path d="M10.200 1.700l8.700 9-8.700 9-8.700-9z" fill="none" stroke="#bdbdbd" stroke-width="1"/><text x="10.200" y="12" text-anchor="middle" font-family="Liberation Sans, sans-serif" font-size="3.300" font-weight="bold" fill="#aaa" textLength="12.500" lengthAdjust="spacingAndGlyphs">CAUTION</text></g>
<g transform="translate(852.30 154.28)"><path d="M10.200 1.700l8.700 9-8.700 9-8.700-9z" fill="none" stroke="#bdbdbd" stroke-width="1"/><text x="10.200" y="12" text-anchor="middle" font-family="Liberation Sans, sans-serif" font-size="3.600" font-weight="bold" fill="#aaa">SLOW</text></g>
<g transform="translate(872.70 154.28)"><path d="M10.200 1.700l8.700 9-8.700 9-8.700-9z" fill="none" stroke="#bdbdbd" stroke-width="1"/><text x="10.200" y="10.400" text-anchor="middle" font-family="Liberation Sans, sans-serif" font-size="2.800" font-weight="bold" fill="#aaa">NARROW</text><text x="10.200" y="13.600" text-anchor="middle" font-family="Liberation Sans, sans-serif" font-size="2.800" font-weight="bold" fill="#aaa">BRIDGE</text></g>
<g transform="translate(893.10 154.28)"><path d="M10.200 1.700l8.700 9-8.700 9-8.700-9z" fill="none" stroke="#bdbdbd" stroke-width="1"/><text x="10.200" y="10.300" text-anchor="middle" font-family="Liberation Sans, sans-serif" font-size="3.600" font-weight="bold" fill="#aaa">DEAD</text><text x="10.200" y="14.300" text-anchor="middle" font-family="Liberation Sans, sans-serif" font-size="3.600" font-weight="bold" fill="#aaa">END</text></g>
<g transform="translate(913.50 154.28)"><path d="M10.300 4.300l1.700 2.700c1.500.2 2.600.8 3.400 1.700h3.300c-.1 1.700-1.300 3-3 3.400-.3 2.800-2.200 4.800-5.400 4.800s-5.100-2-5.400-4.800c-1.700-.4-2.900-1.700-3-3.400h3.300c.8-.9 1.900-1.500 3.400-1.700z" fill="#fff"/><circle cx="10.300" cy="11.200" r="2.200" fill="#000"/></g>
<g transform="translate(933.90 154.28)"><path d="M10.300 1.800l1.700 2.400c1.200.2 2 .7 2.600 1.400h4c-.2 1.700-1.400 2.900-3.200 3.300v1.300h3.200c-.2 1.700-1.400 2.900-3.200 3.300-.2 3-2.100 5.500-5.100 5.500s-4.900-2.500-5.100-5.500c-1.800-.4-3-1.600-3.200-3.300h3.200V8.900C3.400 8.500 2.200 7.300 2 5.600h4c.6-.7 1.400-1.200 2.600-1.400z" fill="#fff"/><circle cx="10.300" cy="8.400" r="2.100" fill="#000"/><circle cx="10.300" cy="14.200" r="2.100" fill="#000"/></g>
<g transform="translate(954.30 154.28)"><path d="M10 1.800l1.500 2c1 .1 1.700.4 2.200.9h3.500c-.2 1.500-1.100 2.400-2.600 2.700v1h2.600c-.2 1.500-1.100 2.400-2.600 2.700v1h2.600c-.2 1.500-1.100 2.400-2.600 2.700-.2 2.800-1.800 5.200-4.600 5.200s-4.400-2.400-4.600-5.200c-1.500-.3-2.400-1.200-2.600-2.700h2.600v-1c-1.500-.3-2.400-1.200-2.600-2.700h2.600v-1C3.900 7.100 3 6.200 2.800 4.700h3.500c.5-.5 1.200-.8 2.200-.9z" fill="#fff"/><circle cx="10" cy="7" r="1.700" fill="#000"/><circle cx="10" cy="11.500" r="1.700" fill="#000"/><circle cx="10" cy="16" r="1.700" fill="#000"/></g>
<g transform="translate(750.30 175.80)"><rect x="1.900" y="3.600" width="17" height="14.400" fill="#fff"/><circle cx="10.300" cy="10.900" r="4.400" fill="#000"/></g>
<g transform="translate(770.70 175.80)"><rect x="3.500" y="1.800" width="13.100" height="18.200" fill="#fff"/><circle cx="10" cy="6.500" r="3.300" fill="#000"/><circle cx="10" cy="14.900" r="3.300" fill="#000"/></g>
<g transform="translate(791.10 175.80)"><rect x="5.300" y="1.800" width="9.300" height="18.200" fill="#fff"/><circle cx="10" cy="5.500" r="2.300" fill="#000"/><circle cx="10" cy="10.900" r="2.300" fill="#000"/><circle cx="10" cy="16.300" r="2.300" fill="#000"/></g>
<g transform="translate(811.50 175.80)"><ellipse cx="10.400" cy="11" rx="8.700" ry="9" fill="#fff"/><path d="M4 11h11.500M11.500 6.600l4.400 4.400-4.400 4.400" fill="none" stroke="#000" stroke-width="2"/></g>
<g transform="translate(831.90 175.80)"><ellipse cx="10.400" cy="11" rx="8.700" ry="9" fill="#fff"/><path d="M16.800 11H5.300M9.300 6.600L4.900 11l4.400 4.400" fill="none" stroke="#000" stroke-width="2"/></g>
<g transform="translate(852.30 175.80)"><ellipse cx="10.400" cy="11" rx="8.700" ry="9" fill="#fff"/><path d="M15.200 16L6.600 7.200M6.200 12.800V6.800h6" fill="none" stroke="#000" stroke-width="2.200"/></g>
<g transform="translate(872.70 175.80)"><ellipse cx="10.400" cy="11" rx="8.700" ry="9" fill="#fff"/><path d="M5.600 16l8.600-8.800M14.600 12.800V6.800h-6" fill="none" stroke="#000" stroke-width="2.200"/></g>
<g transform="translate(893.10 175.80)"><ellipse cx="10.400" cy="11" rx="8.700" ry="9" fill="#fff"/><path d="M10.400 4.300v12M6 12.300l4.400 4.600 4.400-4.600" fill="none" stroke="#000" stroke-width="2"/></g>
<g transform="translate(913.50 175.80)"><ellipse cx="10.400" cy="11" rx="8.700" ry="9" fill="#fff"/><path d="M10.400 17.700v-12M6 9.700l4.400-4.600 4.400 4.600" fill="none" stroke="#000" stroke-width="2"/></g>
<g transform="translate(933.90 175.80)"><ellipse cx="10.400" cy="11" rx="8.700" ry="9" fill="#fff"/><path d="M7.200 5l6.400 12M13.600 5L7.200 17" fill="none" stroke="#000" stroke-width="1.800"/></g>
<g transform="translate(954.30 175.80)"><ellipse cx="10.400" cy="11" rx="8.700" ry="9" fill="#fff"/></g>
<g transform="translate(750.30 197.32)"><path d="M10.200 1.800l1.600 2c1.200.1 2.100.6 2.700 1.300h4.300c-.2 1.800-1.500 3.100-3.400 3.500v3.400h3.400c-.2 1.800-1.500 3.100-3.400 3.500-.3 2.600-2.200 4.300-5.200 4.300s-4.900-1.700-5.200-4.300c-1.900-.4-3.200-1.700-3.400-3.500h3.400V8.600C2.900 8.200 1.600 6.900 1.400 5.100h4.300c.6-.7 1.500-1.200 2.700-1.300z" fill="#fff"/><rect x="7.700" y="5.500" width="5" height="4.400" fill="#000"/><rect x="7.700" y="11.600" width="5" height="4.400" fill="#000"/></g>
<g transform="translate(770.70 197.32)"><rect x="3.500" y="1.800" width="13.100" height="18.200" fill="#fff"/><rect x="6.200" y="3.800" width="7.500" height="6" fill="#000"/><rect x="6.200" y="12" width="7.500" height="6" fill="#000"/></g>
<g transform="translate(791.10 197.32)"><rect x="1.800" y="1.800" width="17.200" height="18" fill="#fff"/><path d="M7.600 17.500v-4.300c-.6-1.500-1-3-1.100-4.600.7-.1 1.100.3 1.300 1l.5 1.600V5.500c0-.6.300-.9.700-.9s.7.300.7.900V4.700c0-.6.300-.9.700-.9s.7.300.7.900v.6c0-.5.300-.8.700-.8s.7.300.7.800v1c0-.5.300-.8.600-.8.400 0 .6.300.6.800v5.600l1.500-1.900c.4-.5.900-.6 1.300-.2-.7 1.300-1.500 2.600-2.600 3.700v4z" fill="#222"/></g>
<g transform="translate(811.50 197.32)"><rect x="1.800" y="1.800" width="17.200" height="18" fill="#fff"/><circle cx="10.8" cy="4.6" r="1.4" fill="#111"/><path d="M10.3 6.8L10.0 11.5" fill="none" stroke="#111" stroke-width="2.4" stroke-linecap="round" stroke-linejoin="round"/><path d="M10.0 11.5L12.0 14.3L13.2 17.8M10.0 11.5L8.6 14.6L7.0 17.8M10.5 7.2L12.6 9.3L13.8 9.3M10.2 7.2L8.5 9.3L8.0 11.0" fill="none" stroke="#111" stroke-width="1.4" stroke-linecap="round" stroke-linejoin="round"/></g>
<g transform="translate(831.90 197.32)"><rect x="1.800" y="1.800" width="17.200" height="18" fill="#fff"/><text x="10.400" y="9.200" text-anchor="middle" font-family="Liberation Sans, sans-serif" font-size="4.900" fill="#505050" textLength="14" lengthAdjust="spacingAndGlyphs">DON'T</text><text x="10.400" y="15" text-anchor="middle" font-family="Liberation Sans, sans-serif" font-size="4.900" fill="#505050" textLength="13.500" lengthAdjust="spacingAndGlyphs">WALK</text></g>
<g transform="translate(852.30 197.32)"><rect x="1.800" y="1.800" width="17.200" height="18" fill="#fff"/><text x="10.400" y="12.600" text-anchor="middle" font-family="Liberation Sans, sans-serif" font-size="5" fill="#484848" textLength="13.800" lengthAdjust="spacingAndGlyphs">WALK</text></g>
<g transform="translate(872.70 197.32)"><rect x="1.400" y="1.800" width="17.700" height="18" fill="#fff"/></g>
<g transform="translate(893.10 197.32)"><path d="M2 7.500c0-1.700 1.300-3 3-3.200 1.200-.1 2 .4 2.600 1.200 1 0 1.800.3 2.500.9 2.500.2 5 .8 7.300 2 1.100.6 1.700 1.600 1.600 2.900l-.7.300c-.2-.8-.6-1.300-1.200-1.600.3 1.700-.2 3.200-1.300 4.400l-.2 2.400h-1.200l-.2-2.800c-.9.300-1.800.4-2.700.3l1.300 1.300-.6 1-2.600-2.200c-1.100-.1-2.100-.5-2.900-1.200l-2 1.100-.6-.9 1.600-1.900c-.5-.8-.7-1.700-.7-2.700-1-.1-1.800-.5-2.400-1.200.7 0 1.200-.2 1.600-.5-.9-.4-1.400-1-1.500-1.800.5.200.9.300 1.300.2z" fill="#fff"/><circle cx="3.800" cy="7.700" r="1.100" fill="#000"/></g>
<g transform="translate(913.50 197.32)"><path d="M2 3.500l1.500.2 1.200 1.800 1.500-.4.400 1.400-.9.600 1.700 1.500 1.200-1 .9 1-.9 1.200 2 1.800c.8-.1 1.400.2 1.800.9l2.900 2.700c.9 0 1.600.3 2 1 .4.700.3 1.400-.3 1.900-.1-.9-.6-1.400-1.400-1.500l-3.400-2.300-.3 1.500-1.200-.3.300-1.900-2.100-1.500-1.300.8-.7-1 1-1.100-1.800-1.500-1.400.6-.5-1.200 1-.8z" fill="#eee"/></g>
<g transform="translate(933.90 197.32)"><path d="M2 11.500c1.800 1.400 4 2.100 6.500 2.200 2.800.1 5.200-.6 7-2.100 1-1.800 1.400-3.800 1.200-6h1.200c.3 3-.4 5.600-2 7.800-2 1.800-4.600 2.700-7.700 2.600-2.600-.1-4.700-1-6.300-2.700z" fill="#f0f0f0"/><path d="M5.300 6.300c.8 0 1.300.5 1.300 1.200l1.200 1.600v3.400H4.600V9.300l.2-1.800c0-.7.200-1.200.5-1.200zM10.600 8.300c1.500-1.700 3.200-2.400 4.300-1.700.6.900-.2 2.500-1.800 3.700l.5 2h-4z" fill="#f0f0f0"/></g>
<g transform="translate(954.30 197.32)"><path d="M1.600 13c1 1.100 2.200 1.700 3.700 1.700h9.800c1.700 0 3-.7 3.800-2.100l-.5 3.300c-.8 1-2 1.500-3.500 1.500H5.600c-1.800 0-3.100-.8-3.800-2.300z" fill="#eee"/><path d="M10.600 4.700c.7 0 1.100.5 1.100 1.100l.6 3.200 1.700 3.600h-4.500l.5-6.300c0-.9.200-1.600.6-1.600zM4.500 12.400v-1.300h11.800v1.300M6.400 11v2.800M8.300 11v2.800M14.800 10v3.800M16.300 9.500v4" fill="#eee" stroke="#ddd" stroke-width=".7"/></g>
<g transform="translate(750.30 218.84)"><path d="M1.600 9.500c.4 2.700 1.600 4.500 3.600 5.400 3.400.6 6.800.4 10.200-.4 2-1 3.200-2.800 3.600-5.400l.7 2.500c-.5 2.400-1.700 4-3.700 4.900-3.700 1-7.500 1.100-11.200.3-2-1-3.100-2.700-3.500-5z" fill="#eee"/><path d="M3.500 5.500c.7 0 1.100.5 1.100 1.100l.7 4.800 1.800-3c.5-.8 1.200-1 1.700-.4l1.200 3.800 1.500-3.400c.4-.8 1.100-.9 1.600-.2l1 3.500 1.600-5c.3-1 .9-1.500 1.500-1.200.7.300.8 1 .5 2l-2.100 6.500H4.300L2.500 7c0-.9.400-1.500 1-1.500z" fill="#eee"/></g>
<g transform="translate(770.70 218.84)"><g fill="#f2f2f2"><circle cx="10" cy="11" r="5.200"/><ellipse cx="16.9" cy="12.4" rx="2.0" ry="1.0" transform="rotate(11 16.9 12.4)"/><ellipse cx="15.0" cy="15.9" rx="2.0" ry="1.0" transform="rotate(44 15.0 15.9)"/><ellipse cx="11.6" cy="17.8" rx="2.0" ry="1.0" transform="rotate(77 11.6 17.8)"/><ellipse cx="7.6" cy="17.6" rx="2.0" ry="1.0" transform="rotate(110 7.6 17.6)"/><ellipse cx="4.5" cy="15.3" rx="2.0" ry="1.0" transform="rotate(142 4.5 15.3)"/><ellipse cx="3.0" cy="11.6" rx="2.0" ry="1.0" transform="rotate(175 3.0 11.6)"/><ellipse cx="3.8" cy="7.7" rx="2.0" ry="1.0" transform="rotate(208 3.8 7.7)"/><ellipse cx="6.6" cy="4.9" rx="2.0" ry="1.0" transform="rotate(241 6.6 4.9)"/><ellipse cx="10.4" cy="4.0" rx="2.0" ry="1.0" transform="rotate(273 10.4 4.0)"/><ellipse cx="14.1" cy="5.3" rx="2.0" ry="1.0" transform="rotate(306 14.1 5.3)"/><ellipse cx="16.5" cy="8.5" rx="2.0" ry="1.0" transform="rotate(339 16.5 8.5)"/></g></g>
<g transform="translate(791.10 218.84)"><g fill="#f2f2f2"><circle cx="10.200" cy="10.500" r="7.400"/><ellipse cx="17.0" cy="14.2" rx="2.1" ry="1.1" transform="rotate(29 17.0 14.2)"/><ellipse cx="13.0" cy="17.8" rx="2.1" ry="1.1" transform="rotate(69 13.0 17.8)"/><ellipse cx="7.7" cy="17.9" rx="2.1" ry="1.1" transform="rotate(109 7.7 17.9)"/><ellipse cx="3.5" cy="14.6" rx="2.1" ry="1.1" transform="rotate(149 3.5 14.6)"/><ellipse cx="2.5" cy="9.3" rx="2.1" ry="1.1" transform="rotate(189 2.5 9.3)"/><ellipse cx="5.0" cy="4.6" rx="2.1" ry="1.1" transform="rotate(229 5.0 4.6)"/><ellipse cx="10.0" cy="2.7" rx="2.1" ry="1.1" transform="rotate(269 10.0 2.7)"/><ellipse cx="15.1" cy="4.4" rx="2.1" ry="1.1" transform="rotate(309 15.1 4.4)"/><ellipse cx="17.8" cy="9.0" rx="2.1" ry="1.1" transform="rotate(349 17.8 9.0)"/></g><circle cx="10.200" cy="10.500" r="4.400" fill="#000"/><circle cx="10.200" cy="10.500" r="3.200" fill="#f2f2f2"/><path d="M13 16.500l1.500 3.800M11.500 17l.3 3" stroke="#f2f2f2" stroke-width="1.200" fill="none"/></g>
<g transform="translate(811.50 218.84)"><circle cx="13.6" cy="6.3" r="1.5" fill="#fff"/><path d="M12.6 8.4L10.0 12.5" fill="none" stroke="#fff" stroke-width="2.6" stroke-linecap="round" stroke-linejoin="round"/><path d="M10.0 12.5L7.3 15.5L4.3 18.3L3.0 18.0M10.0 12.5L8.5 16.5L5.6 19.8M12.8 8.6L14.8 5.8L16.8 4.0M12.3 8.8L10.0 6.3L8.3 3.0M8.3 3.0L12.0 2.4" fill="none" stroke="#fff" stroke-width="1.5" stroke-linecap="round" stroke-linejoin="round"/></g>
<g transform="translate(831.90 218.84)"><circle cx="7.3" cy="6.0" r="1.3" fill="#fff"/><path d="M7.5 8.0L7.3 12.5" fill="none" stroke="#fff" stroke-width="2.2" stroke-linecap="round" stroke-linejoin="round"/><path d="M7.3 12.5L5.6 16.0L4.0 20.0M7.3 12.5L8.8 16.3L8.3 20.0M7.5 8.4L4.8 6.0L3.5 3.0M7.5 8.4L10.3 9.3L12.5 8.5" fill="none" stroke="#fff" stroke-width="1.3" stroke-linecap="round" stroke-linejoin="round"/><circle cx="14.3" cy="7.2" r="1.3" fill="#fff"/><path d="M14.0 9.2L13.5 13.0" fill="none" stroke="#fff" stroke-width="2.2" stroke-linecap="round" stroke-linejoin="round"/><path d="M13.5 13.0L12.2 16.5L11.0 19.8M13.5 13.0L15.2 16.3L16.8 19.6M14.0 9.6L16.6 8.0L18.0 5.3M14.0 9.6L12.5 8.5" fill="none" stroke="#fff" stroke-width="1.3" stroke-linecap="round" stroke-linejoin="round"/></g>
<g transform="translate(852.30 218.84)"><path d="M1.500 6.800c1.300 3.800 3.800 6.600 7.300 8.300 3 1.400 6.200 1.700 9.700.9l-.6 1.600c-3.600.7-6.900.3-10-1.200C4.500 14.600 2.200 11.700 1.500 6.800z" fill="#eee"/><path d="M3 9l14.500 6.200" stroke="#eee" stroke-width="1.700" fill="none"/><circle cx="13.0" cy="6.2" r="1.4" fill="#fff"/><path d="M12.6 8.2L11.6 13.0" fill="none" stroke="#fff" stroke-width="2.8" stroke-linecap="round" stroke-linejoin="round"/><path d="M12.6 8.6L15.0 10.5L15.3 13.5M12.4 8.6L10.0 11.0L9.3 13.5" fill="none" stroke="#fff" stroke-width="1.4" stroke-linecap="round" stroke-linejoin="round"/><ellipse cx="16.300" cy="13" rx="1.300" ry="2" fill="#eee"/></g>
<g transform="translate(872.70 218.84)"><circle cx="11.5" cy="3.7" r="1.5" fill="#fff"/><path d="M11.0 5.8L9.8 11.3" fill="none" stroke="#fff" stroke-width="2.6" stroke-linecap="round" stroke-linejoin="round"/><path d="M9.8 11.3L12.3 14.3L12.6 19.3L14.3 19.6M9.8 11.3L7.6 14.3L4.3 14.5M11.2 6.5L13.3 9.3L14.8 8.6M10.8 6.5L8.6 8.8L8.0 10.8" fill="none" stroke="#fff" stroke-width="1.5" stroke-linecap="round" stroke-linejoin="round"/></g>
<g transform="translate(893.10 218.84)"><circle cx="12.6" cy="3.7" r="1.5" fill="#fff"/><path d="M12.0 5.8L10.0 11.0" fill="none" stroke="#fff" stroke-width="2.7" stroke-linecap="round" stroke-linejoin="round"/><path d="M10.0 11.0L12.6 14.3L14.6 19.3L16.3 19.6M10.0 11.0L7.0 14.0L3.3 15.3L3.0 14.3M12.2 6.5L14.0 9.3L15.5 8.3M11.8 6.5L9.3 8.5L8.3 10.8" fill="none" stroke="#fff" stroke-width="1.5" stroke-linecap="round" stroke-linejoin="round"/></g>
<g transform="translate(913.50 218.84)"><circle cx="10.6" cy="3.6" r="1.5" fill="#fff"/><path d="M10.4 5.8L10.0 11.5" fill="none" stroke="#fff" stroke-width="2.8" stroke-linecap="round" stroke-linejoin="round"/><path d="M10.0 11.5L10.8 15.5L10.6 19.8M10.0 11.5L9.0 15.3L8.6 17.5M10.8 6.5L12.0 9.3L11.3 11.6M10.0 6.5L8.6 9.0L8.8 11.3" fill="none" stroke="#fff" stroke-width="1.5" stroke-linecap="round" stroke-linejoin="round"/></g>
<g transform="translate(933.90 218.84)"><circle cx="10.8" cy="3.6" r="1.4" fill="#fff"/><path d="M10.4 5.8L9.8 11.5" fill="none" stroke="#fff" stroke-width="2.6" stroke-linecap="round" stroke-linejoin="round"/><path d="M9.8 11.5L9.6 15.5L8.0 19.8M9.8 11.5L10.3 15.3L9.6 19.3M10.6 6.5L9.3 9.0L10.3 10.8M10.3 6.5L11.6 9.3" fill="none" stroke="#fff" stroke-width="1.5" stroke-linecap="round" stroke-linejoin="round"/></g>
<g transform="translate(954.30 218.84)"><circle cx="10.6" cy="3.6" r="1.5" fill="#fff"/><path d="M10.6 6.0L10.6 11.5" fill="none" stroke="#fff" stroke-width="3.0" stroke-linecap="round" stroke-linejoin="round"/><path d="M10.6 11.5L10.0 15.5L10.3 19.8M10.6 11.5L11.3 15.5L10.8 19.8M11.3 6.5L12.3 9.3L11.8 12.0M9.8 6.5L9.0 9.3L9.5 12.0" fill="none" stroke="#fff" stroke-width="1.5" stroke-linecap="round" stroke-linejoin="round"/></g>
<g transform="translate(750.30 240.36)"><circle cx="10.0" cy="3.8" r="1.4" fill="#fff"/><path d="M10.0 6.0L10.0 12.0" fill="none" stroke="#fff" stroke-width="3.0" stroke-linecap="round" stroke-linejoin="round"/><path d="M10.0 12.0L9.6 16.0L9.6 20.0M10.0 12.0L10.6 16.0L10.6 20.0M10.8 6.6L11.6 9.5L11.3 12.0M9.2 6.6L8.4 9.5L8.7 12.0" fill="none" stroke="#fff" stroke-width="1.5" stroke-linecap="round" stroke-linejoin="round"/></g>
<g transform="translate(770.70 240.36)"><path d="M9.800 5.500c1.300 2 2.400 5 3 9.500H6.600c.6-4.500 1.700-7.500 3.200-9.500z" fill="#fff"/><circle cx="9.8" cy="3.8" r="1.4" fill="#fff"/><path d="M9.8 6.0L9.8 9.0" fill="none" stroke="#fff" stroke-width="2.4" stroke-linecap="round" stroke-linejoin="round"/><path d="M9.3 14.0L9.3 20.0M10.4 14.0L10.4 20.0" fill="none" stroke="#fff" stroke-width="1.4" stroke-linecap="round" stroke-linejoin="round"/></g>
<g transform="translate(791.10 240.36)"><circle cx="10.0" cy="4.3" r="1.4" fill="#fff"/><path d="M10.0 6.5L10.0 12.5" fill="none" stroke="#fff" stroke-width="3.0" stroke-linecap="round" stroke-linejoin="round"/><path d="M10.0 12.5L9.3 16.0L9.3 20.0M10.0 12.5L10.8 16.0L10.8 20.0M10.8 7.0L13.3 7.3L13.6 3.6L12.3 2.8M9.2 7.0L6.6 7.3L6.3 3.6L7.6 2.8" fill="none" stroke="#fff" stroke-width="1.5" stroke-linecap="round" stroke-linejoin="round"/></g>
<g transform="translate(811.50 240.36)"><circle cx="10.3" cy="5.3" r="1.4" fill="#fff"/><path d="M10.3 7.5L10.3 13.0" fill="none" stroke="#fff" stroke-width="3.0" stroke-linecap="round" stroke-linejoin="round"/><path d="M10.3 13.0L9.6 16.0L9.6 20.0M10.3 13.0L11.0 16.0L11.0 20.0M11.0 8.0L13.0 5.3L14.3 2.6M9.6 8.0L7.6 5.3L6.3 2.6" fill="none" stroke="#fff" stroke-width="1.5" stroke-linecap="round" stroke-linejoin="round"/></g>
<g transform="translate(831.90 240.36)"><circle cx="11.0" cy="3.6" r="1.4" fill="#fff"/><path d="M10.6 5.8L9.6 11.0" fill="none" stroke="#fff" stroke-width="2.8" stroke-linecap="round" stroke-linejoin="round"/><path d="M9.6 11.0L11.6 13.5L13.0 14.3L15.6 14.6M9.6 11.0L7.6 13.0L5.6 14.3M10.8 6.5L13.0 8.3L14.6 7.3M10.4 6.5L8.3 8.3L7.6 10.0" fill="none" stroke="#fff" stroke-width="1.5" stroke-linecap="round" stroke-linejoin="round"/></g>
<g transform="translate(852.30 240.36)"><circle cx="9.8" cy="3.8" r="1.4" fill="#fff"/><path d="M9.8 6.0L9.8 12.0" fill="none" stroke="#fff" stroke-width="3.0" stroke-linecap="round" stroke-linejoin="round"/><path d="M9.8 12.0L9.3 16.0L9.3 20.0M9.8 12.0L10.6 16.0L10.6 20.0M10.6 6.6L12.6 5.3L13.6 2.6M9.0 6.6L8.3 9.5L8.6 12.0" fill="none" stroke="#fff" stroke-width="1.5" stroke-linecap="round" stroke-linejoin="round"/></g>
<g transform="translate(872.70 240.36)"><circle cx="9.3" cy="3.3" r="1.4" fill="#fff"/><path d="M9.0 5.5L8.3 10.5" fill="none" stroke="#fff" stroke-width="2.8" stroke-linecap="round" stroke-linejoin="round"/><path d="M8.3 10.5L10.3 12.6L9.6 14.6L11.6 14.6M8.3 10.5L6.3 12.6L4.3 14.3M9.3 6.0L11.3 8.0L12.6 7.0M8.6 6.0L6.6 7.6L5.6 9.6" fill="none" stroke="#fff" stroke-width="1.5" stroke-linecap="round" stroke-linejoin="round"/></g>
<g transform="translate(893.10 240.36)"><circle cx="9.3" cy="3.0" r="1.4" fill="#fff"/><path d="M9.3 5.3L9.0 10.5" fill="none" stroke="#fff" stroke-width="2.8" stroke-linecap="round" stroke-linejoin="round"/><path d="M9.0 10.5L10.0 14.0L9.6 20.0M9.0 10.5L8.3 14.0L8.3 20.0M10.0 5.8L11.6 7.6L12.3 5.6M8.6 5.8L7.0 8.0L7.3 10.0" fill="none" stroke="#fff" stroke-width="1.5" stroke-linecap="round" stroke-linejoin="round"/></g>
<g transform="translate(913.50 240.36)"><circle cx="9.3" cy="3.6" r="1.4" fill="#fff"/><path d="M9.3 5.8L9.0 10.5" fill="none" stroke="#fff" stroke-width="2.8" stroke-linecap="round" stroke-linejoin="round"/><path d="M9.0 10.5L12.0 11.3L12.6 14.3L13.6 14.3M9.0 10.5L8.0 13.0L7.0 14.3L10.0 14.3M9.8 6.6L12.0 7.6L13.3 7.0M9.0 6.6L8.0 9.0" fill="none" stroke="#fff" stroke-width="1.5" stroke-linecap="round" stroke-linejoin="round"/></g>
<g transform="translate(933.90 240.36)"><circle cx="9.6" cy="3.6" r="1.4" fill="#fff"/><path d="M9.6 5.8L9.3 10.5" fill="none" stroke="#fff" stroke-width="2.8" stroke-linecap="round" stroke-linejoin="round"/><path d="M9.3 10.5L12.3 11.3L12.6 14.3L14.0 14.3M9.3 10.5L8.3 13.0L7.3 14.3L10.3 14.3M10.0 6.6L12.3 7.3L14.0 6.6M9.3 6.6L8.3 9.0" fill="none" stroke="#fff" stroke-width="1.5" stroke-linecap="round" stroke-linejoin="round"/></g>
<g transform="translate(954.30 240.36)"><circle cx="9.3" cy="3.6" r="1.4" fill="#fff"/><path d="M9.3 5.8L9.0 10.5" fill="none" stroke="#fff" stroke-width="2.8" stroke-linecap="round" stroke-linejoin="round"/><path d="M9.0 10.5L12.0 11.3L12.6 14.3L14.6 14.3M9.0 10.5L7.6 13.0L7.0 14.3L10.0 14.3M9.8 6.3L12.6 6.6L15.3 6.3M9.0 6.6L7.6 9.0" fill="none" stroke="#fff" stroke-width="1.5" stroke-linecap="round" stroke-linejoin="round"/></g>
</g>
<rect x="974.700" y="67.600" width="6.300" height="187" fill="#4a4a4a"/>
<rect x="981" y="67.600" width="10" height="187" fill="#3d3d3d"/>
<path d="M983.800 74.600l1.600-2 1.600 2zM983.800 248.600l1.600 2 1.600-2z" fill="#f0f0f0"/>
<rect x="981.500" y="80.500" width="7.500" height="10.500" rx="1.500" fill="#7c7c7c" stroke="#8e8e8e" stroke-width=".8"/>
<g transform="translate(999.400 72) scale(.78)"><g fill="#d4d4d4"><circle r="2.700"/><rect x="-.9" y="-4.200" width="1.800" height="8.400"/><rect x="-.9" y="-4.200" width="1.800" height="8.400" transform="rotate(45)"/><rect x="-.9" y="-4.200" width="1.800" height="8.400" transform="rotate(90)"/><rect x="-.9" y="-4.200" width="1.800" height="8.400" transform="rotate(135)"/></g><circle r="1.300" fill="#646464"/><path d="M4.800 .4v2.200l1.500-1.100z" fill="#999"/></g>
<path d="M1010.500 255v6h-6zM1010.500 255" fill="none"/>
<g fill="#b8b8b8"><rect x="1009" y="256" width="1.500" height="1.500"/><rect x="1007" y="258" width="1.500" height="1.500"/><rect x="1009" y="258" width="1.500" height="1.500"/><rect x="1005" y="260" width="1.500" height="1.500"/><rect x="1007" y="260" width="1.500" height="1.500"/><rect x="1009" y="260" width="1.500" height="1.500"/></g>
</svg>
</body>
</html>
